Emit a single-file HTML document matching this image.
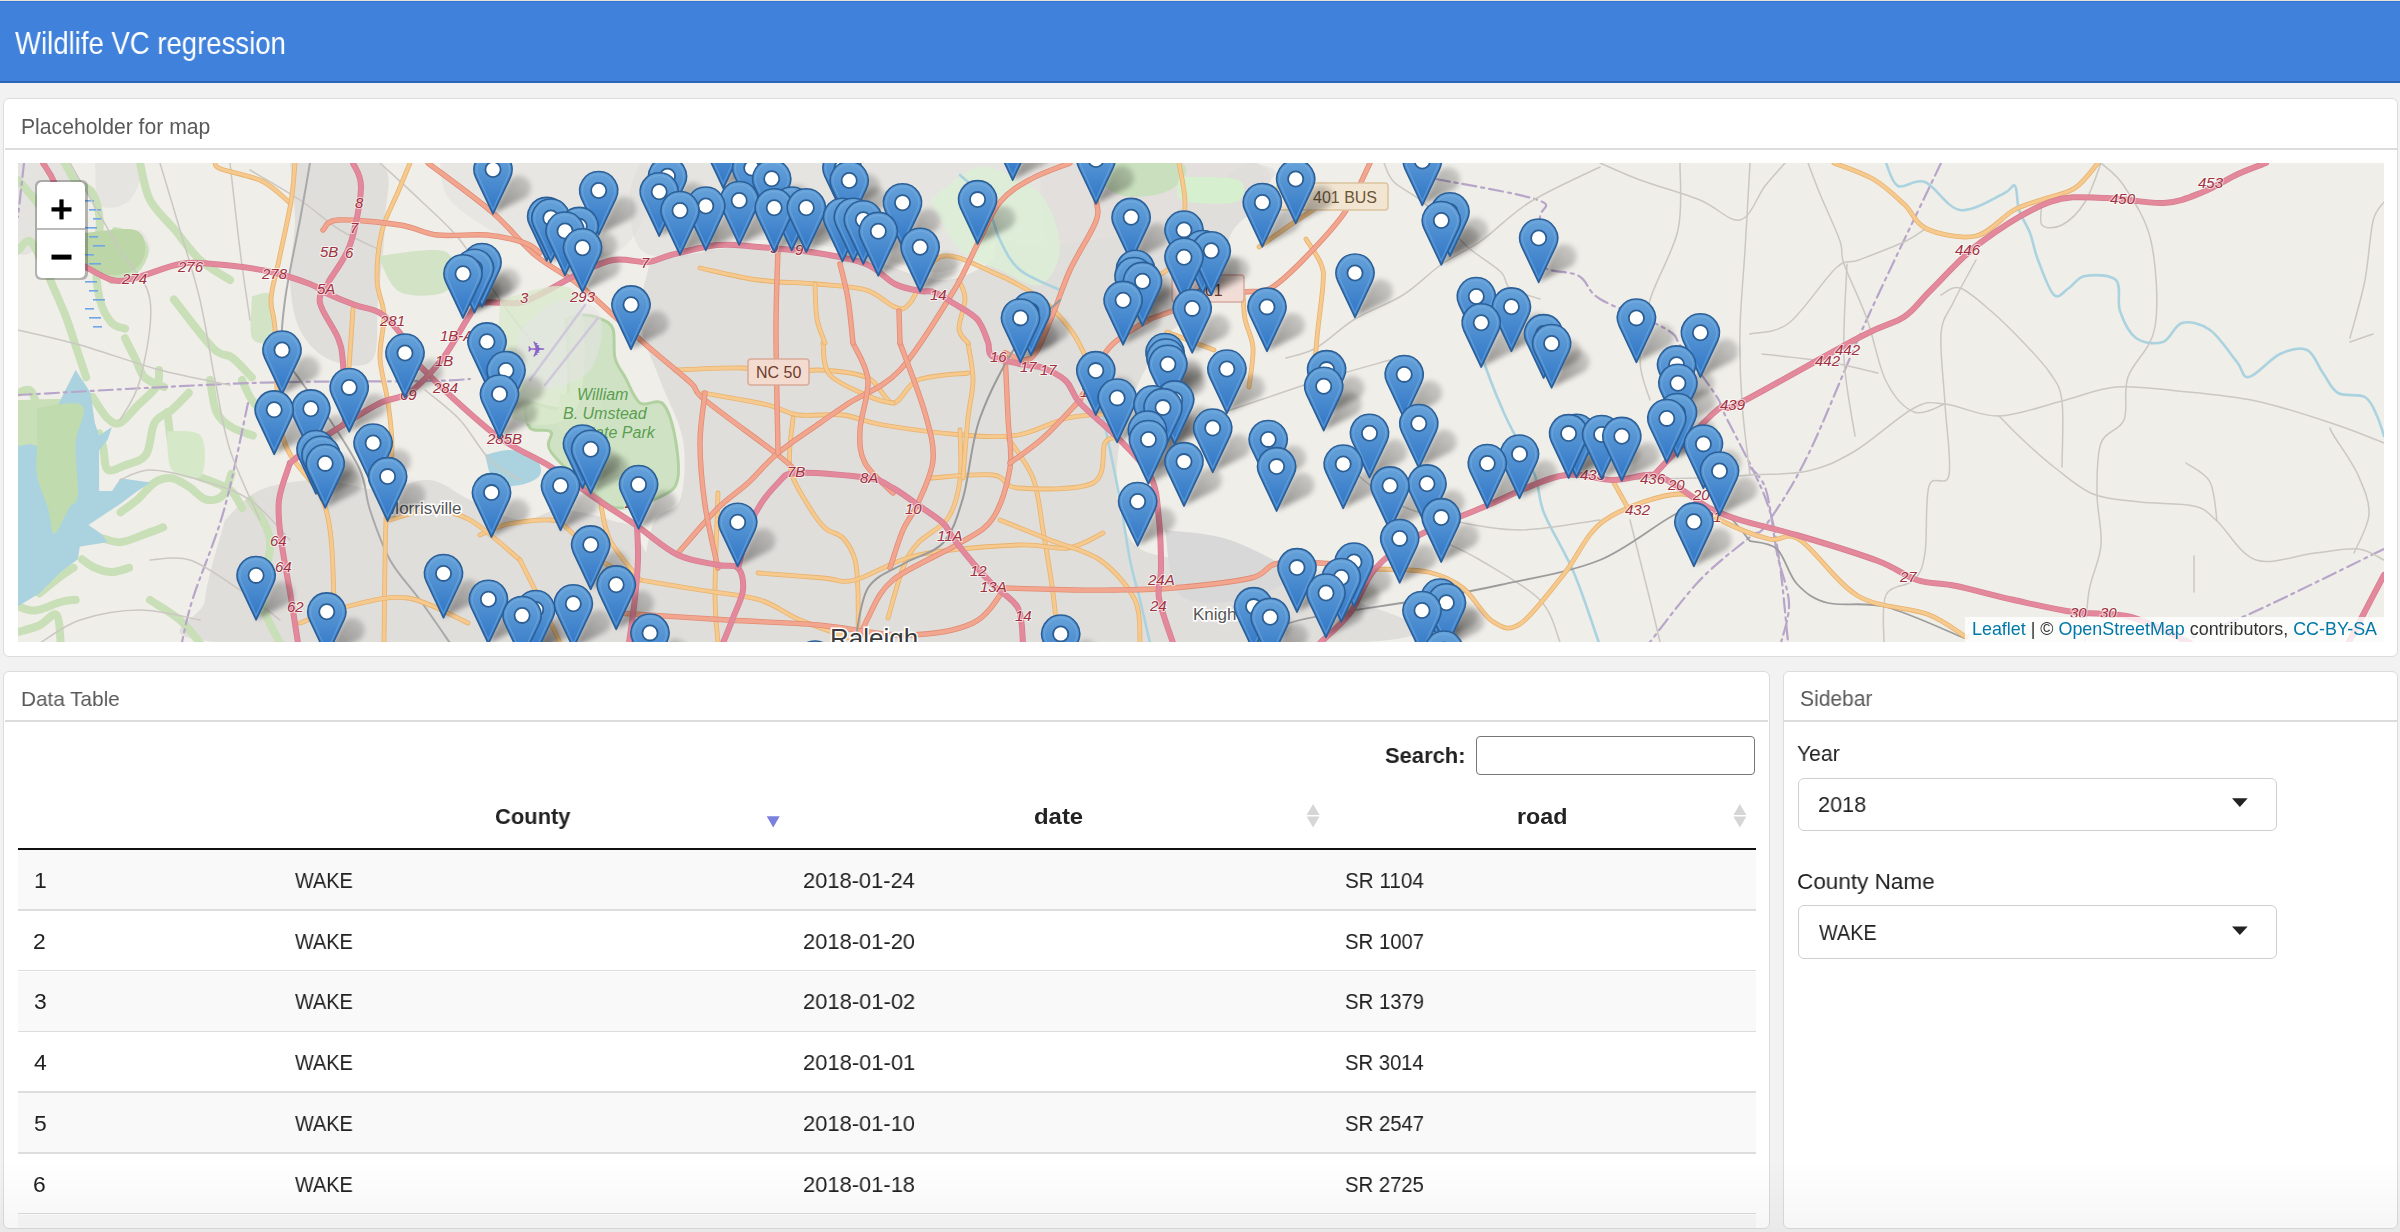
<!DOCTYPE html><html><head><meta charset="utf-8"><title>Wildlife VC regression</title><style>
html,body{margin:0;padding:0;}
body{width:2400px;height:1232px;overflow:hidden;background:#f2f2f2;position:relative;font-family:"Liberation Sans",sans-serif;}
.abs{position:absolute;}
.t{position:absolute;white-space:nowrap;transform-origin:0 0;will-change:transform;}
.card{position:absolute;background:#fff;border:1.5px solid #dcdcdc;border-radius:6px;box-sizing:border-box;}
.hl{position:absolute;height:2px;background:#dcdcdc;}
</style></head><body>
<div class="abs" style="left:0;top:0;width:2400px;height:1px;background:#e6e3da"></div>
<div class="abs" style="left:0;top:1px;width:2400px;height:1px;background:#3474d8"></div>
<div class="abs" style="left:0;top:2px;width:2400px;height:79px;background:#4082db"></div>
<div class="abs" style="left:0;top:81px;width:2400px;height:1.5px;background:#2f67b8"></div>
<div class="card" style="left:3px;top:97.5px;width:2395px;height:559px;"></div>
<div class="hl" style="left:4.5px;top:148px;width:2392px;"></div>
<div class="card" style="left:3px;top:670.5px;width:1766.5px;height:558px;"></div>
<div class="hl" style="left:4.5px;top:720px;width:1763.5px;"></div>
<div class="card" style="left:1782.5px;top:670.5px;width:615.5px;height:558px;"></div>
<div class="hl" style="left:1784px;top:720px;width:612.5px;"></div>
<div class="abs" style="left:1476px;top:735.5px;width:279px;height:39px;border:1.5px solid #767676;border-radius:4px;box-sizing:border-box;background:#fff"></div>
<div class="abs" style="left:18px;top:848px;width:1738px;height:2px;background:#111"></div>
<div class="abs" style="left:18px;top:850px;width:1738px;height:377.5px;overflow:hidden">
<div class="abs" style="left:0;top:0.00px;width:1738px;height:60.75px;background:#f9f9f9"></div>
<div class="abs" style="left:0;top:59.20px;width:1738px;height:1.5px;background:#dddddd"></div>
<div class="abs" style="left:0;top:119.95px;width:1738px;height:1.5px;background:#dddddd"></div>
<div class="abs" style="left:0;top:121.50px;width:1738px;height:60.75px;background:#f9f9f9"></div>
<div class="abs" style="left:0;top:180.70px;width:1738px;height:1.5px;background:#dddddd"></div>
<div class="abs" style="left:0;top:241.45px;width:1738px;height:1.5px;background:#dddddd"></div>
<div class="abs" style="left:0;top:243.00px;width:1738px;height:60.75px;background:#f9f9f9"></div>
<div class="abs" style="left:0;top:302.20px;width:1738px;height:1.5px;background:#dddddd"></div>
<div class="abs" style="left:0;top:362.95px;width:1738px;height:1.5px;background:#dddddd"></div>
<div class="abs" style="left:0;top:364.50px;width:1738px;height:60.75px;background:#f9f9f9"></div>
<div class="abs" style="left:0;top:423.70px;width:1738px;height:1.5px;background:#dddddd"></div>
</div>
<svg class="abs" style="left:0;top:0" width="2400" height="1232">
<path d="M766.7,816.3 L779.7,816.3 L773.2,827.4 Z" fill="#7b80dc"/>
<path d="M1306.6,815 L1319.6,815 L1313.1,804 Z" fill="#d6d6d6"/>
<path d="M1306.6,816.5 L1319.6,816.5 L1313.1,827.5 Z" fill="#d6d6d6"/>
<path d="M1733.4,815 L1746.4,815 L1739.9,804 Z" fill="#d6d6d6"/>
<path d="M1733.4,816.5 L1746.4,816.5 L1739.9,827.5 Z" fill="#d6d6d6"/>
</svg>
<div class="abs" style="left:1797.5px;top:777.5px;width:479px;height:53.5px;border:1.5px solid #cfcfcf;border-radius:6px;box-sizing:border-box;background:#fff"></div>
<div class="abs" style="left:1797.5px;top:905px;width:479px;height:53.5px;border:1.5px solid #cfcfcf;border-radius:6px;box-sizing:border-box;background:#fff"></div>
<svg class="abs" style="left:0;top:0" width="2400" height="1232">
<path d="M2232,798.3 L2247.7,798.3 L2239.85,807.0 Z" fill="#222"/>
<path d="M2232,926.4 L2247.7,926.4 L2239.85,935.1 Z" fill="#222"/>
</svg>
<svg class="abs" style="left:18px;top:163px" width="2366" height="479" viewBox="18 163 2366 479">
<defs>
<linearGradient id="mg" x1="0" y1="0" x2="0" y2="1"><stop offset="0" stop-color="#67a3da"/><stop offset="1" stop-color="#2f75c6"/></linearGradient>
<linearGradient id="sg" x1="0" y1="1" x2="1" y2="0"><stop offset="0" stop-color="#000" stop-opacity="0.42"/><stop offset="1" stop-color="#000" stop-opacity="0.12"/></linearGradient>
<filter id="shb" x="-20%" y="-20%" width="140%" height="140%"><feGaussianBlur stdDeviation="2.6"/></filter>
<filter id="bl1" x="-5%" y="-5%" width="110%" height="110%"><feGaussianBlur stdDeviation="1.2"/></filter>
<g id="mk">
<path d="M0,44.5 L-17.2,8.1 A19,19 0 1 1 17.2,8.1 Z" fill="url(#mg)" stroke="#2b5f98" stroke-width="1.6" stroke-linejoin="round"/>
<path d="M0,40 L-14.5,7.4 A16.2,16.2 0 1 1 14.5,7.4 Z" fill="none" stroke="#7fb3e3" stroke-opacity="0.45" stroke-width="1.2"/>
<circle r="7.6" fill="#fff" stroke="#2d5e92" stroke-width="1.8"/>
</g>
</defs>
<rect x="18" y="163" width="2366" height="479" fill="#f0eee9"/>
<path d="M650.0,262.0 C668.3,259.2 725.0,245.7 760.0,245.0 C795.0,244.3 830.0,252.2 860.0,258.0 C890.0,263.8 918.3,279.3 940.0,280.0 C961.7,280.7 980.0,268.7 990.0,262.0 C1000.0,255.3 990.0,242.8 1000.0,240.0 C1010.0,237.2 1025.0,247.5 1050.0,245.0 C1075.0,242.5 1116.7,238.7 1150.0,225.0 C1183.3,211.3 1231.3,167.2 1250.0,163.0 C1268.7,158.8 1265.0,188.5 1262.0,200.0 C1259.0,211.5 1240.3,217.0 1232.0,232.0 C1223.7,247.0 1222.0,273.7 1212.0,290.0 C1202.0,306.3 1184.0,315.0 1172.0,330.0 C1160.0,345.0 1148.7,361.7 1140.0,380.0 C1131.3,398.3 1123.7,420.0 1120.0,440.0 C1116.3,460.0 1115.5,482.5 1118.0,500.0 C1120.5,517.5 1124.7,535.0 1135.0,545.0 C1145.3,555.0 1162.5,555.5 1180.0,560.0 C1197.5,564.5 1220.0,567.8 1240.0,572.0 C1260.0,576.2 1281.7,580.7 1300.0,585.0 C1318.3,589.3 1339.2,588.5 1350.0,598.0 C1360.8,607.5 1490.0,634.7 1365.0,642.0 C1240.0,649.3 725.5,649.0 600.0,642.0 C474.5,635.0 605.3,612.0 612.0,600.0 C618.7,588.0 632.8,583.3 640.0,570.0 C647.2,556.7 648.3,531.7 655.0,520.0 C661.7,508.3 675.3,513.3 680.0,500.0 C684.7,486.7 686.3,460.0 683.0,440.0 C679.7,420.0 667.2,400.0 660.0,380.0 C652.8,360.0 641.7,339.7 640.0,320.0 C638.3,300.3 648.3,271.7 650.0,262.0 Z" fill="#e0dedb" />
<path d="M640.0,163.0 C741.7,163.0 1165.0,152.7 1250.0,163.0 C1335.0,173.3 1183.3,211.3 1150.0,225.0 C1116.7,238.7 1075.0,242.5 1050.0,245.0 C1025.0,247.5 1018.3,235.5 1000.0,240.0 C981.7,244.5 963.3,270.0 940.0,272.0 C916.7,274.0 890.0,257.3 860.0,252.0 C830.0,246.7 795.0,239.5 760.0,240.0 C725.0,240.5 671.7,261.7 650.0,255.0 C628.3,248.3 631.7,215.3 630.0,200.0 C628.3,184.7 638.3,169.2 640.0,163.0 Z" fill="#e0dedb" fill-opacity="0.6"/>
<path d="M225.0,520.0 C230.8,515.0 244.2,496.7 260.0,490.0 C275.8,483.3 300.0,480.0 320.0,480.0 C340.0,480.0 361.7,490.0 380.0,490.0 C398.3,490.0 415.0,478.3 430.0,480.0 C445.0,481.7 455.0,493.3 470.0,500.0 C485.0,506.7 505.0,518.3 520.0,520.0 C535.0,521.7 545.0,510.0 560.0,510.0 C575.0,510.0 596.7,515.0 610.0,520.0 C623.3,525.0 635.0,519.7 640.0,540.0 C645.0,560.3 710.8,625.0 640.0,642.0 C569.2,659.0 287.5,649.0 215.0,642.0 C142.5,635.0 203.3,620.3 205.0,600.0 C206.7,579.7 221.7,533.3 225.0,520.0 Z" fill="#e0dedb" />
<path d="M290.0,163.0 C305.0,163.0 364.2,153.5 380.0,163.0 C395.8,172.5 385.3,197.2 385.0,220.0 C384.7,242.8 380.2,276.7 378.0,300.0 C375.8,323.3 380.0,350.0 372.0,360.0 C364.0,370.0 342.0,365.0 330.0,360.0 C318.0,355.0 306.7,343.3 300.0,330.0 C293.3,316.7 290.8,298.3 290.0,280.0 C289.2,261.7 295.0,239.5 295.0,220.0 C295.0,200.5 290.8,172.5 290.0,163.0 Z" fill="#e0dedb" />
<path d="M440.0,163.0 C473.3,163.0 605.0,156.8 640.0,163.0 C675.0,169.2 653.3,185.5 650.0,200.0 C646.7,214.5 635.0,240.3 620.0,250.0 C605.0,259.7 580.0,260.5 560.0,258.0 C540.0,255.5 518.3,244.7 500.0,235.0 C481.7,225.3 460.0,212.0 450.0,200.0 C440.0,188.0 441.7,169.2 440.0,163.0 Z" fill="#e0dedb" fill-opacity="0.5"/>
<path d="M1040.0,163.0 C1075.0,163.0 1213.0,156.8 1250.0,163.0 C1287.0,169.2 1265.0,188.5 1262.0,200.0 C1259.0,211.5 1240.3,217.0 1232.0,232.0 C1223.7,247.0 1222.0,273.7 1212.0,290.0 C1202.0,306.3 1187.0,321.3 1172.0,330.0 C1157.0,338.7 1137.0,346.7 1122.0,342.0 C1107.0,337.3 1093.7,315.3 1082.0,302.0 C1070.3,288.7 1058.7,277.0 1052.0,262.0 C1045.3,247.0 1044.0,228.5 1042.0,212.0 C1040.0,195.5 1040.3,171.2 1040.0,163.0 Z" fill="#e0dedb" fill-opacity="0.75"/>
<path d="M18.0,163.0 C26.7,163.0 62.7,156.8 70.0,163.0 C77.3,169.2 66.2,187.2 62.0,200.0 C57.8,212.8 52.3,231.7 45.0,240.0 C37.7,248.3 22.5,262.8 18.0,250.0 C13.5,237.2 18.0,177.5 18.0,163.0 Z" fill="#e0dedb" fill-opacity="0.7"/>
<path d="M95.0,163.0 C102.5,163.0 134.2,156.8 140.0,163.0 C145.8,169.2 136.7,193.0 130.0,200.0 C123.3,207.0 105.8,211.2 100.0,205.0 C94.2,198.8 95.8,170.0 95.0,163.0 Z" fill="#e0dedb" fill-opacity="0.6"/>
<path d="M120.0,240.0 C123.3,238.3 135.0,228.3 140.0,230.0 C145.0,231.7 150.8,244.7 150.0,250.0 C149.2,255.3 140.0,263.7 135.0,262.0 C130.0,260.3 122.5,243.7 120.0,240.0 Z" fill="#e0dedb" fill-opacity="0.5"/>
<path d="M1165.0,530.0 C1175.8,531.7 1209.2,532.5 1230.0,540.0 C1250.8,547.5 1288.3,565.0 1290.0,575.0 C1291.7,585.0 1258.3,596.7 1240.0,600.0 C1221.7,603.3 1192.5,606.7 1180.0,595.0 C1167.5,583.3 1167.5,540.8 1165.0,530.0 Z" fill="#d9d8d8" />
<path d="M566.0,319.0 C569.0,318.3 578.2,315.0 584.0,315.0 C589.8,315.0 596.2,316.7 601.0,319.0 C605.8,321.3 610.7,322.5 613.0,329.0 C615.3,335.5 613.0,350.0 615.0,358.0 C617.0,366.0 620.8,369.5 625.0,377.0 C629.2,384.5 633.8,398.7 640.0,403.0 C646.2,407.3 656.3,398.2 662.0,403.0 C667.7,407.8 671.3,419.7 674.0,432.0 C676.7,444.3 679.7,466.5 678.0,477.0 C676.3,487.5 673.5,489.8 664.0,495.0 C654.5,500.2 632.3,508.0 621.0,508.0 C609.7,508.0 607.7,504.3 596.0,495.0 C584.3,485.7 558.5,462.5 551.0,452.0 C543.5,441.5 554.5,436.0 551.0,432.0 C547.5,428.0 533.8,432.8 530.0,428.0 C526.2,423.2 522.0,407.2 528.0,403.0 C534.0,398.8 559.7,417.0 566.0,403.0 C572.3,389.0 566.0,333.0 566.0,319.0 Z" fill="#cfe3c4" stroke="#b2d1a1" stroke-width="3"/>
<path d="M64.8,163.0 C66.7,166.2 71.9,177.6 76.4,182.5 C80.9,187.4 88.1,185.7 92.0,192.2 C95.9,198.7 99.1,210.0 99.8,221.4 C100.5,232.8 96.0,247.4 96.0,260.4 C96.0,273.4 97.2,289.0 99.8,299.4 C102.4,309.8 107.3,317.8 111.5,322.7 C115.7,327.6 122.8,327.6 125.0,328.6" fill="none" stroke="#c9dfb8" stroke-width="8" stroke-linecap="round" stroke-linejoin="round" />
<path d="M18.0,250.7 C19.9,249.1 25.8,239.4 29.7,241.0 C33.6,242.6 36.9,251.3 41.4,260.4 C45.9,269.5 52.8,285.8 57.0,295.5 C61.2,305.2 63.5,310.1 66.7,318.9 C69.9,327.6 73.2,338.3 76.4,348.0 C79.7,357.7 84.6,372.4 86.2,377.3" fill="none" stroke="#c9dfb8" stroke-width="8" stroke-linecap="round" stroke-linejoin="round" />
<path d="M115.4,231.2 C118.7,232.2 130.0,233.8 134.9,237.0 C139.8,240.2 144.6,245.2 144.6,250.7 C144.6,256.2 140.4,265.1 134.9,270.0 C129.4,274.9 115.4,278.3 111.5,280.0" fill="none" stroke="#c9dfb8" stroke-width="8" stroke-linecap="round" stroke-linejoin="round" />
<path d="M125.0,338.3 C126.7,341.6 131.6,351.3 134.9,357.8 C138.2,364.3 139.7,372.4 144.6,377.3 C149.5,382.2 160.8,385.4 164.1,387.0" fill="none" stroke="#c9dfb8" stroke-width="8" stroke-linecap="round" stroke-linejoin="round" />
<path d="M173.9,299.4 C180.4,307.5 203.1,338.3 212.8,348.0 C222.5,357.7 225.8,352.9 232.3,357.8 C238.8,362.7 248.6,374.1 251.8,377.3" fill="none" stroke="#c9dfb8" stroke-width="8" stroke-linecap="round" stroke-linejoin="round" />
<path d="M18.0,392.8 C20.1,392.4 27.2,387.5 30.8,390.7 C34.4,393.9 36.1,404.9 39.3,412.0 C42.5,419.1 46.8,425.9 50.0,433.4 C53.2,440.9 57.2,452.9 58.6,456.8" fill="none" stroke="#c9dfb8" stroke-width="8" stroke-linecap="round" stroke-linejoin="round" />
<path d="M92.7,397.0 C95.2,400.6 103.0,414.1 107.6,418.4 C112.2,422.7 115.5,424.8 120.5,422.7 C125.5,420.6 131.5,411.7 137.5,405.6 C143.5,399.6 153.1,392.3 156.7,386.4 C160.3,380.5 158.6,372.7 159.0,370.0" fill="none" stroke="#c9dfb8" stroke-width="8" stroke-linecap="round" stroke-linejoin="round" />
<path d="M99.1,433.4 C99.8,435.9 102.0,442.3 103.4,448.3 C104.8,454.3 104.0,466.8 107.6,469.6 C111.1,472.5 118.3,467.9 124.7,465.4 C131.1,462.9 141.0,461.8 146.0,454.7 C151.0,447.6 150.3,430.2 154.6,422.7 C158.9,415.2 166.0,414.9 171.7,409.9 C177.4,404.9 186.0,395.6 188.8,392.8" fill="none" stroke="#c9dfb8" stroke-width="8" stroke-linecap="round" stroke-linejoin="round" />
<path d="M120.5,512.3 C123.3,510.2 131.8,504.5 137.5,499.5 C143.2,494.5 148.9,486.1 154.6,482.5 C160.3,478.9 166.0,477.5 171.7,478.2 C177.4,478.9 183.1,483.1 188.8,486.7 C194.5,490.2 200.1,498.1 205.8,499.5 C211.5,500.9 218.6,499.6 222.9,495.3 C227.2,491.0 230.0,477.5 231.4,473.9" fill="none" stroke="#c9dfb8" stroke-width="8" stroke-linecap="round" stroke-linejoin="round" />
<path d="M167.4,412.0 C168.1,417.3 169.6,435.8 171.7,444.0 C173.8,452.2 176.6,456.1 180.2,461.1 C183.8,466.1 187.3,470.3 193.0,473.9 C198.7,477.5 208.0,479.6 214.4,482.5 C220.8,485.4 226.8,486.8 231.4,491.0 C236.0,495.2 240.3,505.2 242.1,508.0" fill="none" stroke="#c9dfb8" stroke-width="8" stroke-linecap="round" stroke-linejoin="round" />
<path d="M82.0,542.2 C84.8,541.5 92.7,538.0 99.1,538.0 C105.5,538.0 112.7,542.9 120.5,542.2 C128.3,541.5 138.9,536.2 146.0,533.7 C153.1,531.2 160.2,528.4 163.1,527.3" fill="none" stroke="#c9dfb8" stroke-width="8" stroke-linecap="round" stroke-linejoin="round" />
<path d="M82.0,559.3 C84.1,560.7 89.8,565.7 94.8,567.8 C99.8,569.9 106.2,572.1 111.9,572.1 C117.6,572.1 126.2,568.5 129.0,567.8" fill="none" stroke="#c9dfb8" stroke-width="8" stroke-linecap="round" stroke-linejoin="round" />
<path d="M39.3,593.4 C42.9,590.6 55.0,580.7 60.7,576.4 C66.4,572.1 71.4,569.2 73.5,567.8" fill="none" stroke="#c9dfb8" stroke-width="8" stroke-linecap="round" stroke-linejoin="round" />
<path d="M18.0,606.3 C20.9,607.0 28.0,611.2 35.1,610.5 C42.2,609.8 54.0,603.8 60.7,602.0 C67.5,600.2 73.1,600.2 75.6,599.8" fill="none" stroke="#c9dfb8" stroke-width="8" stroke-linecap="round" stroke-linejoin="round" />
<path d="M18.0,632.0 C21.6,630.9 32.9,628.4 39.3,625.5 C45.7,622.6 52.8,611.9 56.4,614.8 C60.0,617.7 60.0,638.3 60.7,643.0" fill="none" stroke="#c9dfb8" stroke-width="8" stroke-linecap="round" stroke-linejoin="round" />
<path d="M210.0,380.0 C211.1,385.3 212.9,404.2 216.5,412.0 C220.1,419.8 225.3,423.1 231.4,427.0 C237.5,430.9 249.2,434.1 252.8,435.5" fill="none" stroke="#c9dfb8" stroke-width="8" stroke-linecap="round" stroke-linejoin="round" />
<path d="M242.0,380.0 C243.8,383.6 247.5,394.2 252.8,401.3 C258.1,408.4 270.5,419.1 274.0,422.7" fill="none" stroke="#c9dfb8" stroke-width="8" stroke-linecap="round" stroke-linejoin="round" />
<path d="M140.0,163.0 C141.7,169.2 144.2,188.8 150.0,200.0 C155.8,211.2 166.7,220.0 175.0,230.0 C183.3,240.0 190.8,251.7 200.0,260.0 C209.2,268.3 225.0,276.7 230.0,280.0" fill="none" stroke="#c9dfb8" stroke-width="8" stroke-linecap="round" stroke-linejoin="round" />
<path d="M18.0,180.0 C20.8,183.3 29.7,193.3 35.0,200.0 C40.3,206.7 47.5,216.7 50.0,220.0" fill="none" stroke="#c9dfb8" stroke-width="8" stroke-linecap="round" stroke-linejoin="round" />
<path d="M150.0,600.0 C155.0,603.3 171.7,612.8 180.0,620.0 C188.3,627.2 196.7,639.2 200.0,643.0" fill="none" stroke="#c9dfb8" stroke-width="8" stroke-linecap="round" stroke-linejoin="round" />
<path d="M250.0,500.0 C253.3,506.7 268.0,523.3 270.0,540.0 C272.0,556.7 260.3,582.8 262.0,600.0 C263.7,617.2 277.0,635.8 280.0,643.0" fill="none" stroke="#c9dfb8" stroke-width="8" stroke-linecap="round" stroke-linejoin="round" />
<path d="M84.0,233.0 C92.5,232.5 124.8,226.8 135.0,230.0 C145.2,233.2 145.8,245.0 145.0,252.0 C144.2,259.0 139.2,268.7 130.0,272.0 C120.8,275.3 97.7,278.5 90.0,272.0 C82.3,265.5 85.0,239.5 84.0,233.0 Z" fill="#bcd6a8" />
<path d="M167.0,431.0 C172.7,431.8 195.3,428.5 201.0,436.0 C206.7,443.5 205.8,470.3 201.0,476.0 C196.2,481.7 177.7,477.5 172.0,470.0 C166.3,462.5 167.8,437.5 167.0,431.0 Z" fill="#d5e8c8" />
<path d="M18.0,400.0 C28.7,400.5 72.3,395.7 82.0,403.0 C91.7,410.3 86.7,436.8 76.0,444.0 C65.3,451.2 27.7,453.3 18.0,446.0 C8.3,438.7 18.0,407.7 18.0,400.0 Z" fill="#c9dfb8" />
<path d="M378.0,256.0 C389.3,255.3 434.3,246.3 446.0,252.0 C457.7,257.7 455.7,283.3 448.0,290.0 C440.3,296.7 411.7,297.7 400.0,292.0 C388.3,286.3 381.7,262.0 378.0,256.0 Z" fill="#d2e4c5" />
<path d="M252.0,296.0 C255.3,296.0 268.7,289.0 272.0,296.0 C275.3,303.0 275.3,331.0 272.0,338.0 C268.7,345.0 255.3,345.0 252.0,338.0 C248.7,331.0 252.0,303.0 252.0,296.0 Z" fill="#d2e4c5" />
<path d="M930.0,200.0 C937.5,194.7 961.7,172.2 975.0,168.0 C988.3,163.8 998.3,169.7 1010.0,175.0 C1021.7,180.3 1036.7,187.5 1045.0,200.0 C1053.3,212.5 1060.8,235.8 1060.0,250.0 C1059.2,264.2 1050.0,281.7 1040.0,285.0 C1030.0,288.3 1013.3,275.8 1000.0,270.0 C986.7,264.2 971.7,261.7 960.0,250.0 C948.3,238.3 935.0,208.3 930.0,200.0 Z" fill="#dcefd6" fill-opacity="0.8"/>
<path d="M1080.0,163.0 C1096.7,163.0 1165.0,158.5 1180.0,163.0 C1195.0,167.5 1180.0,184.7 1170.0,190.0 C1160.0,195.3 1135.0,199.5 1120.0,195.0 C1105.0,190.5 1086.7,168.3 1080.0,163.0 Z" fill="#c9dfbd" />
<path d="M1179.0,177.0 C1188.8,177.5 1228.5,175.8 1238.0,180.0 C1247.5,184.2 1245.3,198.7 1236.0,202.0 C1226.7,205.3 1191.5,204.2 1182.0,200.0 C1172.5,195.8 1179.5,180.8 1179.0,177.0 Z" fill="#d5efcf" />
<path d="M560.0,395.0 C566.7,394.5 595.0,386.2 600.0,392.0 C605.0,397.8 596.7,423.7 590.0,430.0 C583.3,436.3 565.0,435.8 560.0,430.0 C555.0,424.2 560.0,400.8 560.0,395.0 Z" fill="#d2e4c5" />
<polygon points="75.6,370.0 90.6,392.8 94.8,422.7 99.1,435.5 112.0,427.0 107.6,439.8 99.1,450.4 99.1,491.0 112.0,491.0 120.5,478.2 150.3,482.5 137.5,491.0 120.5,503.8 107.6,512.3 88.4,525.1 101.2,533.7 107.6,542.2 79.9,546.5 77.8,559.3 60.7,572.1 39.3,593.4 18.0,606.3 18.0,446.0 30.8,444.0 37.2,446.0" fill="#aad3df" />
<path d="M37.2,407.7 C44.7,407.4 75.6,399.6 82.0,405.6 C88.4,411.7 76.3,429.1 75.6,444.0 C74.9,458.9 78.9,484.6 77.8,495.3 C76.7,506.0 73.1,501.6 69.2,508.0 C65.3,514.4 57.8,533.7 54.3,533.7 C50.8,533.7 50.8,517.6 47.9,508.0 C45.0,498.4 39.0,486.7 37.2,476.0 C35.4,465.3 37.2,455.4 37.2,444.0 C37.2,432.6 37.2,413.8 37.2,407.7 Z" fill="#c0dbad" />
<path d="M485.0,455.0 C489.2,454.2 501.7,449.5 510.0,450.0 C518.3,450.5 530.0,453.8 535.0,458.0 C540.0,462.2 542.5,470.5 540.0,475.0 C537.5,479.5 527.5,483.7 520.0,485.0 C512.5,486.3 500.8,488.0 495.0,483.0 C489.2,478.0 486.7,459.7 485.0,455.0 Z" fill="#aad3df" />
<rect x="85" y="200" width="9" height="1.6" fill="#6fa6e6"/>
<rect x="89" y="209" width="12" height="1.6" fill="#6fa6e6"/>
<rect x="93" y="218" width="9" height="1.6" fill="#6fa6e6"/>
<rect x="85" y="227" width="12" height="1.6" fill="#6fa6e6"/>
<rect x="89" y="236" width="9" height="1.6" fill="#6fa6e6"/>
<rect x="93" y="245" width="12" height="1.6" fill="#6fa6e6"/>
<rect x="85" y="254" width="9" height="1.6" fill="#6fa6e6"/>
<rect x="89" y="263" width="12" height="1.6" fill="#6fa6e6"/>
<rect x="93" y="272" width="9" height="1.6" fill="#6fa6e6"/>
<rect x="85" y="281" width="12" height="1.6" fill="#6fa6e6"/>
<rect x="89" y="290" width="9" height="1.6" fill="#6fa6e6"/>
<rect x="93" y="299" width="12" height="1.6" fill="#6fa6e6"/>
<rect x="85" y="308" width="9" height="1.6" fill="#6fa6e6"/>
<rect x="89" y="317" width="12" height="1.6" fill="#6fa6e6"/>
<rect x="93" y="326" width="9" height="1.6" fill="#6fa6e6"/>
<path d="M18.0,395.0 C57.0,393.0 183.8,385.3 252.0,383.0 C320.2,380.7 390.7,381.7 427.0,381.0 C463.3,380.3 462.8,379.3 470.0,379.0" fill="none" stroke="#b7a6c9" stroke-width="2.2" stroke-linecap="round" stroke-linejoin="round" stroke-dasharray="14 5 3 5"/>
<path d="M248.0,403.0 C244.0,420.8 233.2,477.5 224.0,510.0 C214.8,542.5 200.0,576.0 193.0,598.0 C186.0,620.0 183.8,634.7 182.0,642.0" fill="none" stroke="#b7a6c9" stroke-width="2.2" stroke-linecap="round" stroke-linejoin="round" stroke-dasharray="14 5 3 5"/>
<path d="M24.0,163.0 L18.0,217.0" fill="none" stroke="#b7a6c9" stroke-width="2.2" stroke-linecap="round" stroke-linejoin="round" stroke-dasharray="14 5 3 5"/>
<path d="M1436.0,179.0 C1453.0,182.5 1520.7,193.5 1538.0,200.0 C1555.3,206.5 1539.7,207.3 1540.0,218.0 C1540.3,228.7 1533.5,254.3 1540.0,264.0 C1546.5,273.7 1569.0,270.2 1579.0,276.0 C1589.0,281.8 1585.5,290.2 1600.0,299.0 C1614.5,307.8 1652.3,320.8 1666.0,329.0 C1679.7,337.2 1673.5,336.7 1682.0,348.0 C1690.5,359.3 1710.0,386.2 1717.0,397.0 C1724.0,407.8 1716.0,396.3 1724.0,413.0 C1732.0,429.7 1755.8,472.7 1765.0,497.0 C1774.2,521.3 1775.2,534.8 1779.0,559.0 C1782.8,583.2 1786.5,628.2 1788.0,642.0" fill="none" stroke="#b7a6c9" stroke-width="2.2" stroke-linecap="round" stroke-linejoin="round" stroke-dasharray="14 5 3 5"/>
<path d="M1941.0,163.0 C1928.7,189.0 1889.2,270.3 1867.0,319.0 C1844.8,367.7 1824.8,420.7 1808.0,455.0 C1791.2,489.3 1775.7,511.3 1766.0,525.0 C1756.3,538.7 1761.0,527.8 1750.0,537.0 C1739.0,546.2 1716.7,562.5 1700.0,580.0 C1683.3,597.5 1658.3,631.7 1650.0,642.0" fill="none" stroke="#b7a6c9" stroke-width="2.2" stroke-linecap="round" stroke-linejoin="round" stroke-dasharray="14 5 3 5"/>
<path d="M2384.0,549.0 C2362.7,559.3 2290.3,595.3 2256.0,611.0 C2221.7,626.7 2191.0,637.7 2178.0,643.0" fill="none" stroke="#b7a6c9" stroke-width="2.2" stroke-linecap="round" stroke-linejoin="round" stroke-dasharray="14 5 3 5"/>
<path d="M1750.0,467.0 C1752.7,470.8 1761.5,475.7 1766.0,490.0 C1770.5,504.3 1773.2,534.2 1777.0,553.0 C1780.8,571.8 1788.3,588.0 1789.0,603.0 C1789.7,618.0 1782.3,636.3 1781.0,643.0" fill="none" stroke="#b7a6c9" stroke-width="2.2" stroke-linecap="round" stroke-linejoin="round" stroke-dasharray="14 5 3 5"/>
<path d="M1886.0,163.0 C1888.0,166.8 1891.5,182.8 1898.0,186.0 C1904.5,189.2 1914.7,178.0 1925.0,182.0 C1935.3,186.0 1947.0,208.0 1960.0,210.0 C1973.0,212.0 1993.8,198.0 2003.0,194.0 C2012.2,190.0 2012.3,183.3 2015.0,186.0 C2017.7,188.7 2016.5,202.2 2019.0,210.0 C2021.5,217.8 2026.8,224.7 2030.0,233.0 C2033.2,241.3 2034.0,249.7 2038.0,260.0 C2042.0,270.3 2048.8,290.3 2054.0,295.0 C2059.2,299.7 2063.8,291.2 2069.0,288.0 C2074.2,284.8 2077.2,277.3 2085.0,276.0 C2092.8,274.7 2110.2,274.2 2116.0,280.0 C2121.8,285.8 2116.7,301.3 2120.0,311.0 C2123.3,320.7 2128.8,332.8 2136.0,338.0 C2143.2,343.2 2155.3,344.5 2163.0,342.0 C2170.7,339.5 2174.2,325.0 2182.0,323.0 C2189.8,321.0 2200.8,323.5 2210.0,330.0 C2219.2,336.5 2230.5,354.2 2237.0,362.0 C2243.5,369.8 2241.8,378.3 2249.0,377.0 C2256.2,375.7 2270.3,358.5 2280.0,354.0 C2289.7,349.5 2299.8,346.8 2307.0,350.0 C2314.2,353.2 2317.8,365.8 2323.0,373.0 C2328.2,380.2 2331.0,389.0 2338.0,393.0 C2345.0,397.0 2358.5,393.2 2365.0,397.0 C2371.5,400.8 2373.8,409.5 2377.0,416.0 C2380.2,422.5 2382.8,432.7 2384.0,436.0" fill="none" stroke="#aad3df" stroke-width="2.6" stroke-linecap="round" stroke-linejoin="round" />
<path d="M1470.0,300.0 C1471.8,308.8 1475.3,334.2 1481.0,353.0 C1486.7,371.8 1495.2,393.0 1504.0,413.0 C1512.8,433.0 1527.3,456.3 1534.0,473.0 C1540.7,489.7 1537.3,496.3 1544.0,513.0 C1550.7,529.7 1564.8,551.3 1574.0,573.0 C1583.2,594.7 1594.8,631.3 1599.0,643.0" fill="none" stroke="#aad3df" stroke-width="2.6" stroke-linecap="round" stroke-linejoin="round" />
<path d="M960.0,175.0 C964.2,179.2 978.3,189.2 985.0,200.0 C991.7,210.8 994.2,228.3 1000.0,240.0 C1005.8,251.7 1010.0,261.7 1020.0,270.0 C1030.0,278.3 1053.3,286.7 1060.0,290.0" fill="none" stroke="#aad3df" stroke-width="2.6" stroke-linecap="round" stroke-linejoin="round" />
<path d="M1100.0,403.0 C1101.7,410.8 1106.7,433.8 1110.0,450.0 C1113.3,466.2 1116.7,481.7 1120.0,500.0 C1123.3,518.3 1126.7,543.3 1130.0,560.0 C1133.3,576.7 1136.7,586.2 1140.0,600.0 C1143.3,613.8 1148.3,635.8 1150.0,643.0" fill="none" stroke="#aad3df" stroke-width="2.6" stroke-linecap="round" stroke-linejoin="round" />
<path d="M1808.0,163.0 C1810.0,168.2 1814.7,181.0 1820.0,194.0 C1825.3,207.0 1836.0,229.3 1840.0,241.0 C1844.0,252.7 1839.5,251.0 1844.0,264.0 C1848.5,277.0 1860.0,299.5 1867.0,319.0 C1874.0,338.5 1878.2,365.5 1886.0,381.0 C1893.8,396.5 1904.2,408.2 1914.0,412.0 C1923.8,415.8 1939.8,405.3 1945.0,404.0" fill="none" stroke="#cbc7c2" stroke-width="1.5" stroke-linecap="round" stroke-linejoin="round" />
<path d="M1750.0,334.0 C1756.5,332.2 1774.7,334.0 1789.0,323.0 C1803.3,312.0 1824.3,278.5 1836.0,268.0 C1847.7,257.5 1847.3,264.5 1859.0,260.0 C1870.7,255.5 1895.0,246.2 1906.0,241.0 C1917.0,235.8 1921.8,231.0 1925.0,229.0" fill="none" stroke="#cbc7c2" stroke-width="1.5" stroke-linecap="round" stroke-linejoin="round" />
<path d="M1762.0,354.0 C1773.0,355.3 1808.7,358.8 1828.0,362.0 C1847.3,365.2 1869.7,371.2 1878.0,373.0" fill="none" stroke="#cbc7c2" stroke-width="1.5" stroke-linecap="round" stroke-linejoin="round" />
<path d="M1847.0,264.0 C1846.5,279.7 1842.7,329.3 1844.0,358.0 C1845.3,386.7 1853.2,423.0 1855.0,436.0" fill="none" stroke="#cbc7c2" stroke-width="1.5" stroke-linecap="round" stroke-linejoin="round" />
<path d="M1600.0,480.0 C1616.7,479.7 1675.0,478.8 1700.0,478.0 C1725.0,477.2 1732.0,476.2 1750.0,475.0 C1768.0,473.8 1790.5,475.0 1808.0,471.0 C1825.5,467.0 1837.3,461.5 1855.0,451.0 C1872.7,440.5 1899.0,415.8 1914.0,408.0 C1929.0,400.2 1930.8,402.7 1945.0,404.0 C1959.2,405.3 1979.5,416.5 1999.0,416.0 C2018.5,415.5 2042.5,405.8 2062.0,401.0 C2081.5,396.2 2096.7,388.7 2116.0,387.0 C2135.3,385.3 2154.7,388.7 2178.0,391.0 C2201.3,393.3 2230.0,395.5 2256.0,401.0 C2282.0,406.5 2312.7,417.0 2334.0,424.0 C2355.3,431.0 2375.7,439.8 2384.0,443.0" fill="none" stroke="#cbc7c2" stroke-width="1.5" stroke-linecap="round" stroke-linejoin="round" />
<path d="M2101.0,163.0 C2104.8,166.8 2115.7,173.0 2124.0,186.0 C2132.3,199.0 2145.8,217.5 2151.0,241.0 C2156.2,264.5 2158.8,304.3 2155.0,327.0 C2151.2,349.7 2133.2,361.5 2128.0,377.0 C2122.8,392.5 2128.5,409.0 2124.0,420.0 C2119.5,431.0 2105.5,430.7 2101.0,443.0 C2096.5,455.3 2097.0,477.0 2097.0,494.0 C2097.0,511.0 2102.3,528.8 2101.0,545.0 C2099.7,561.2 2091.7,574.7 2089.0,591.0 C2086.3,607.3 2085.7,634.3 2085.0,643.0" fill="none" stroke="#cbc7c2" stroke-width="1.5" stroke-linecap="round" stroke-linejoin="round" />
<path d="M1941.0,295.0 C1944.2,293.8 1951.7,285.3 1960.0,288.0 C1968.3,290.7 1980.5,302.0 1991.0,311.0 C2001.5,320.0 2013.2,331.7 2023.0,342.0 C2032.8,352.3 2043.5,363.2 2050.0,373.0 C2056.5,382.8 2060.0,385.3 2062.0,401.0 C2064.0,416.7 2062.0,456.0 2062.0,467.0" fill="none" stroke="#cbc7c2" stroke-width="1.5" stroke-linecap="round" stroke-linejoin="round" />
<path d="M1976.0,260.0 C1972.2,267.2 1958.8,290.7 1953.0,303.0 C1947.2,315.3 1942.3,317.2 1941.0,334.0 C1939.7,350.8 1943.7,380.5 1945.0,404.0 C1946.3,427.5 1951.7,461.3 1949.0,475.0 C1946.3,488.7 1933.0,473.0 1929.0,486.0 C1925.0,499.0 1927.5,537.3 1925.0,553.0 C1922.5,568.7 1920.5,573.0 1914.0,580.0 C1907.5,587.0 1891.0,584.5 1886.0,595.0 C1881.0,605.5 1884.3,635.0 1884.0,643.0" fill="none" stroke="#cbc7c2" stroke-width="1.5" stroke-linecap="round" stroke-linejoin="round" />
<path d="M1999.0,416.0 C2003.0,420.0 2013.8,431.5 2023.0,440.0 C2032.2,448.5 2042.3,458.0 2054.0,467.0 C2065.7,476.0 2078.7,488.2 2093.0,494.0 C2107.3,499.8 2123.2,500.0 2140.0,502.0 C2156.8,504.0 2181.2,502.8 2194.0,506.0 C2206.8,509.2 2206.7,512.0 2217.0,521.0 C2227.3,530.0 2239.7,554.7 2256.0,560.0 C2272.3,565.3 2298.0,554.8 2315.0,553.0 C2332.0,551.2 2346.5,547.8 2358.0,549.0 C2369.5,550.2 2379.7,558.2 2384.0,560.0" fill="none" stroke="#cbc7c2" stroke-width="1.5" stroke-linecap="round" stroke-linejoin="round" />
<path d="M2330.0,428.0 C2330.7,429.3 2329.3,428.2 2334.0,436.0 C2338.7,443.8 2352.2,462.0 2358.0,475.0 C2363.8,488.0 2369.7,501.0 2369.0,514.0 C2368.3,527.0 2356.5,546.5 2354.0,553.0" fill="none" stroke="#cbc7c2" stroke-width="1.5" stroke-linecap="round" stroke-linejoin="round" />
<path d="M2350.0,342.0 L2373.0,334.0" fill="none" stroke="#cbc7c2" stroke-width="1.5" stroke-linecap="round" stroke-linejoin="round" />
<path d="M2350.0,338.0 C2352.5,328.3 2361.2,299.5 2365.0,280.0 C2368.8,260.5 2369.8,234.0 2373.0,221.0 C2376.2,208.0 2382.2,205.2 2384.0,202.0" fill="none" stroke="#cbc7c2" stroke-width="1.5" stroke-linecap="round" stroke-linejoin="round" />
<path d="M2042.0,202.0 C2042.0,205.8 2038.7,221.2 2042.0,225.0 C2045.3,228.8 2054.8,228.8 2062.0,225.0 C2069.2,221.2 2078.5,212.3 2085.0,202.0 C2091.5,191.7 2098.3,169.5 2101.0,163.0" fill="none" stroke="#cbc7c2" stroke-width="1.5" stroke-linecap="round" stroke-linejoin="round" />
<path d="M2186.0,463.0 C2190.0,466.2 2204.8,472.3 2210.0,482.0 C2215.2,491.7 2215.8,514.5 2217.0,521.0" fill="none" stroke="#cbc7c2" stroke-width="1.5" stroke-linecap="round" stroke-linejoin="round" />
<path d="M2194.0,556.0 L2194.0,592.0" fill="none" stroke="#cbc7c2" stroke-width="1.5" stroke-linecap="round" stroke-linejoin="round" />
<path d="M1600.0,163.0 C1606.7,165.8 1623.3,173.8 1640.0,180.0 C1656.7,186.2 1683.3,193.3 1700.0,200.0 C1716.7,206.7 1729.2,222.3 1740.0,220.0 C1750.8,217.7 1757.5,195.5 1765.0,186.0 C1772.5,176.5 1781.7,166.8 1785.0,163.0" fill="none" stroke="#cbc7c2" stroke-width="1.5" stroke-linecap="round" stroke-linejoin="round" />
<path d="M1680.0,163.0 C1679.7,174.2 1683.0,207.2 1678.0,230.0 C1673.0,252.8 1656.3,278.3 1650.0,300.0 C1643.7,321.7 1640.0,343.3 1640.0,360.0 C1640.0,376.7 1648.3,393.3 1650.0,400.0" fill="none" stroke="#cbc7c2" stroke-width="1.5" stroke-linecap="round" stroke-linejoin="round" />
<path d="M1750.0,163.0 C1749.2,177.5 1746.7,222.2 1745.0,250.0 C1743.3,277.8 1740.5,304.5 1740.0,330.0 C1739.5,355.5 1740.3,378.8 1742.0,403.0 C1743.7,427.2 1748.7,463.0 1750.0,475.0" fill="none" stroke="#cbc7c2" stroke-width="1.5" stroke-linecap="round" stroke-linejoin="round" />
<path d="M1286.0,358.0 C1291.0,356.3 1304.5,354.5 1316.0,348.0 C1327.5,341.5 1340.5,327.8 1355.0,319.0 C1369.5,310.2 1388.5,304.2 1403.0,295.0 C1417.5,285.8 1429.0,273.0 1442.0,264.0 C1455.0,255.0 1466.3,251.3 1481.0,241.0 C1495.7,230.7 1510.2,214.3 1530.0,202.0 C1549.8,189.7 1588.3,172.8 1600.0,167.0" fill="none" stroke="#cbc7c2" stroke-width="1.5" stroke-linecap="round" stroke-linejoin="round" />
<path d="M1384.0,163.0 C1385.7,166.2 1387.5,175.5 1394.0,182.0 C1400.5,188.5 1413.3,193.8 1423.0,202.0 C1432.7,210.2 1444.2,223.2 1452.0,231.0 C1459.8,238.8 1461.8,242.2 1470.0,249.0 C1478.2,255.8 1494.3,265.5 1501.0,272.0 C1507.7,278.5 1503.5,283.5 1510.0,288.0 C1516.5,292.5 1535.0,297.2 1540.0,299.0" fill="none" stroke="#cbc7c2" stroke-width="1.5" stroke-linecap="round" stroke-linejoin="round" />
<path d="M1200.0,420.0 C1210.0,416.7 1240.0,406.7 1260.0,400.0 C1280.0,393.3 1298.3,386.7 1320.0,380.0 C1341.7,373.3 1378.3,363.3 1390.0,360.0" fill="none" stroke="#cbc7c2" stroke-width="1.5" stroke-linecap="round" stroke-linejoin="round" />
<path d="M1330.0,450.0 C1340.0,458.3 1370.0,488.3 1390.0,500.0 C1410.0,511.7 1428.3,515.0 1450.0,520.0 C1471.7,525.0 1495.0,530.0 1520.0,530.0 C1545.0,530.0 1586.7,521.7 1600.0,520.0" fill="none" stroke="#cbc7c2" stroke-width="1.5" stroke-linecap="round" stroke-linejoin="round" />
<path d="M1440.0,540.0 C1446.7,543.3 1463.3,550.0 1480.0,560.0 C1496.7,570.0 1526.7,586.3 1540.0,600.0 C1553.3,613.7 1556.7,635.0 1560.0,642.0" fill="none" stroke="#cbc7c2" stroke-width="1.5" stroke-linecap="round" stroke-linejoin="round" />
<path d="M1630.0,520.0 C1633.3,533.3 1645.0,579.7 1650.0,600.0 C1655.0,620.3 1658.3,635.0 1660.0,642.0" fill="none" stroke="#cbc7c2" stroke-width="1.5" stroke-linecap="round" stroke-linejoin="round" />
<path d="M70.0,163.0 C78.3,177.5 106.7,227.2 120.0,250.0 C133.3,272.8 146.7,278.3 150.0,300.0 C153.3,321.7 145.0,360.0 140.0,380.0 C135.0,400.0 123.3,413.3 120.0,420.0" fill="none" stroke="#cbc7c2" stroke-width="1.5" stroke-linecap="round" stroke-linejoin="round" />
<path d="M18.0,330.0 C28.3,332.5 56.3,338.3 80.0,345.0 C103.7,351.7 135.0,363.3 160.0,370.0 C185.0,376.7 218.3,382.5 230.0,385.0" fill="none" stroke="#cbc7c2" stroke-width="1.5" stroke-linecap="round" stroke-linejoin="round" />
<path d="M160.0,163.0 C163.3,174.2 173.3,207.2 180.0,230.0 C186.7,252.8 194.2,275.0 200.0,300.0 C205.8,325.0 210.0,355.0 215.0,380.0 C220.0,405.0 222.5,426.7 230.0,450.0 C237.5,473.3 255.0,508.3 260.0,520.0" fill="none" stroke="#cbc7c2" stroke-width="1.5" stroke-linecap="round" stroke-linejoin="round" />
<path d="M230.0,163.0 C231.7,177.5 236.7,223.8 240.0,250.0 C243.3,276.2 248.3,308.3 250.0,320.0" fill="none" stroke="#cbc7c2" stroke-width="1.5" stroke-linecap="round" stroke-linejoin="round" />
<path d="M120.0,480.0 C125.0,478.3 136.7,470.0 150.0,470.0 C163.3,470.0 183.3,475.0 200.0,480.0 C216.7,485.0 235.0,490.0 250.0,500.0 C265.0,510.0 283.3,533.3 290.0,540.0" fill="none" stroke="#cbc7c2" stroke-width="1.5" stroke-linecap="round" stroke-linejoin="round" />
<path d="M150.0,560.0 C156.7,560.0 175.0,555.0 190.0,560.0 C205.0,565.0 225.0,580.0 240.0,590.0 C255.0,600.0 273.3,615.0 280.0,620.0" fill="none" stroke="#cbc7c2" stroke-width="1.5" stroke-linecap="round" stroke-linejoin="round" />
<path d="M40.0,643.0 C46.7,639.2 63.3,625.5 80.0,620.0 C96.7,614.5 120.0,610.0 140.0,610.0 C160.0,610.0 190.0,618.3 200.0,620.0" fill="none" stroke="#cbc7c2" stroke-width="1.5" stroke-linecap="round" stroke-linejoin="round" />
<path d="M380.0,163.0 C386.7,169.2 406.7,187.2 420.0,200.0 C433.3,212.8 446.7,223.3 460.0,240.0 C473.3,256.7 488.3,283.3 500.0,300.0 C511.7,316.7 525.0,333.3 530.0,340.0" fill="none" stroke="#cbc7c2" stroke-width="1.5" stroke-linecap="round" stroke-linejoin="round" />
<path d="M250.0,170.0 C258.3,175.0 285.0,190.0 300.0,200.0 C315.0,210.0 326.7,221.7 340.0,230.0 C353.3,238.3 373.3,246.7 380.0,250.0" fill="none" stroke="#cbc7c2" stroke-width="1.5" stroke-linecap="round" stroke-linejoin="round" />
<path d="M425.0,390.0 C430.8,395.0 449.2,408.3 460.0,420.0 C470.8,431.7 480.0,450.0 490.0,460.0 C500.0,470.0 515.0,476.7 520.0,480.0" fill="none" stroke="#cbc7c2" stroke-width="1.5" stroke-linecap="round" stroke-linejoin="round" />
<path d="M1750.0,541.0 C1754.5,542.3 1769.2,541.8 1777.0,549.0 C1784.8,556.2 1788.5,575.0 1797.0,584.0 C1805.5,593.0 1813.2,599.2 1828.0,603.0 C1842.8,606.8 1863.3,601.2 1886.0,607.0 C1908.7,612.8 1951.0,632.8 1964.0,638.0" fill="none" stroke="#9c9c9c" stroke-width="1.8" stroke-linecap="round" stroke-linejoin="round" />
<path d="M310.0,163.0 C308.3,172.5 304.2,197.2 300.0,220.0 C295.8,242.8 287.8,278.3 285.0,300.0 C282.2,321.7 280.5,336.7 283.0,350.0 C285.5,363.3 292.2,368.3 300.0,380.0 C307.8,391.7 320.0,405.0 330.0,420.0 C340.0,435.0 353.3,455.0 360.0,470.0 C366.7,485.0 365.0,495.0 370.0,510.0 C375.0,525.0 381.7,545.0 390.0,560.0 C398.3,575.0 410.0,586.2 420.0,600.0 C430.0,613.8 445.0,635.8 450.0,643.0" fill="none" stroke="#a9a9a9" stroke-width="2" stroke-linecap="round" stroke-linejoin="round" />
<path d="M1250.0,642.0 C1258.3,638.3 1271.7,627.0 1300.0,620.0 C1328.3,613.0 1386.7,605.8 1420.0,600.0 C1453.3,594.2 1470.0,591.7 1500.0,585.0 C1530.0,578.3 1570.0,572.2 1600.0,560.0 C1630.0,547.8 1660.0,520.3 1680.0,512.0 C1700.0,503.7 1708.3,505.2 1720.0,510.0 C1731.7,514.8 1745.0,535.8 1750.0,541.0" fill="none" stroke="#9c9c9c" stroke-width="1.8" stroke-linecap="round" stroke-linejoin="round" />
<path d="M700.0,268.0 C709.7,270.0 738.5,277.3 758.0,280.0 C777.5,282.7 799.0,282.3 817.0,284.0 C835.0,285.7 853.0,286.2 866.0,290.0 C879.0,293.8 887.7,304.8 895.0,307.0 C902.3,309.2 902.5,311.3 910.0,303.0 C917.5,294.7 926.3,262.2 940.0,257.0 C953.7,251.8 975.2,265.0 992.0,272.0 C1008.8,279.0 1028.0,289.5 1041.0,299.0 C1054.0,308.5 1062.5,319.2 1070.0,329.0 C1077.5,338.8 1081.0,346.2 1086.0,358.0 C1091.0,369.8 1097.7,393.0 1100.0,400.0" fill="none" stroke="#e8b36f" stroke-width="4.800000000000001" stroke-linecap="round" stroke-linejoin="round"/>
<path d="M700.0,268.0 C709.7,270.0 738.5,277.3 758.0,280.0 C777.5,282.7 799.0,282.3 817.0,284.0 C835.0,285.7 853.0,286.2 866.0,290.0 C879.0,293.8 887.7,304.8 895.0,307.0 C902.3,309.2 902.5,311.3 910.0,303.0 C917.5,294.7 926.3,262.2 940.0,257.0 C953.7,251.8 975.2,265.0 992.0,272.0 C1008.8,279.0 1028.0,289.5 1041.0,299.0 C1054.0,308.5 1062.5,319.2 1070.0,329.0 C1077.5,338.8 1081.0,346.2 1086.0,358.0 C1091.0,369.8 1097.7,393.0 1100.0,400.0" fill="none" stroke="#f6c98e" stroke-width="3.2" stroke-linecap="round" stroke-linejoin="round" />
<path d="M675.0,370.0 C686.3,369.7 725.8,367.2 743.0,368.0 C760.2,368.8 765.5,374.7 778.0,375.0 C790.5,375.3 803.0,369.5 818.0,370.0 C833.0,370.5 855.5,372.5 868.0,378.0 C880.5,383.5 884.7,402.7 893.0,403.0 C901.3,403.3 905.5,385.0 918.0,380.0 C930.5,375.0 959.7,374.2 968.0,373.0" fill="none" stroke="#e8b36f" stroke-width="4.800000000000001" stroke-linecap="round" stroke-linejoin="round"/>
<path d="M675.0,370.0 C686.3,369.7 725.8,367.2 743.0,368.0 C760.2,368.8 765.5,374.7 778.0,375.0 C790.5,375.3 803.0,369.5 818.0,370.0 C833.0,370.5 855.5,372.5 868.0,378.0 C880.5,383.5 884.7,402.7 893.0,403.0 C901.3,403.3 905.5,385.0 918.0,380.0 C930.5,375.0 959.7,374.2 968.0,373.0" fill="none" stroke="#f6c98e" stroke-width="3.2" stroke-linecap="round" stroke-linejoin="round" />
<path d="M703.0,393.0 C713.8,395.0 752.2,401.3 768.0,405.0 C783.8,408.7 785.5,413.3 798.0,415.0 C810.5,416.7 828.8,413.3 843.0,415.0 C857.2,416.7 863.0,421.7 883.0,425.0 C903.0,428.3 940.5,433.3 963.0,435.0 C985.5,436.7 1000.5,437.8 1018.0,435.0 C1035.5,432.2 1051.3,421.7 1068.0,418.0 C1084.7,414.3 1109.7,413.8 1118.0,413.0" fill="none" stroke="#e8b36f" stroke-width="4.800000000000001" stroke-linecap="round" stroke-linejoin="round"/>
<path d="M703.0,393.0 C713.8,395.0 752.2,401.3 768.0,405.0 C783.8,408.7 785.5,413.3 798.0,415.0 C810.5,416.7 828.8,413.3 843.0,415.0 C857.2,416.7 863.0,421.7 883.0,425.0 C903.0,428.3 940.5,433.3 963.0,435.0 C985.5,436.7 1000.5,437.8 1018.0,435.0 C1035.5,432.2 1051.3,421.7 1068.0,418.0 C1084.7,414.3 1109.7,413.8 1118.0,413.0" fill="none" stroke="#f6c98e" stroke-width="3.2" stroke-linecap="round" stroke-linejoin="round" />
<path d="M793.0,418.0 C792.5,426.3 787.5,453.5 790.0,468.0 C792.5,482.5 802.2,495.0 808.0,505.0 C813.8,515.0 819.2,522.5 825.0,528.0 C830.8,533.5 838.0,532.7 843.0,538.0 C848.0,543.3 852.5,550.8 855.0,560.0 C857.5,569.2 857.5,579.2 858.0,593.0 C858.5,606.8 858.0,634.7 858.0,643.0" fill="none" stroke="#e8b36f" stroke-width="4.800000000000001" stroke-linecap="round" stroke-linejoin="round"/>
<path d="M793.0,418.0 C792.5,426.3 787.5,453.5 790.0,468.0 C792.5,482.5 802.2,495.0 808.0,505.0 C813.8,515.0 819.2,522.5 825.0,528.0 C830.8,533.5 838.0,532.7 843.0,538.0 C848.0,543.3 852.5,550.8 855.0,560.0 C857.5,569.2 857.5,579.2 858.0,593.0 C858.5,606.8 858.0,634.7 858.0,643.0" fill="none" stroke="#f6c98e" stroke-width="3.2" stroke-linecap="round" stroke-linejoin="round" />
<path d="M960.0,430.0 C960.0,438.3 962.0,465.3 960.0,480.0 C958.0,494.7 955.0,507.5 948.0,518.0 C941.0,528.5 925.5,534.7 918.0,543.0 C910.5,551.3 908.0,555.5 903.0,568.0 C898.0,580.5 890.5,609.7 888.0,618.0" fill="none" stroke="#e8b36f" stroke-width="4.800000000000001" stroke-linecap="round" stroke-linejoin="round"/>
<path d="M960.0,430.0 C960.0,438.3 962.0,465.3 960.0,480.0 C958.0,494.7 955.0,507.5 948.0,518.0 C941.0,528.5 925.5,534.7 918.0,543.0 C910.5,551.3 908.0,555.5 903.0,568.0 C898.0,580.5 890.5,609.7 888.0,618.0" fill="none" stroke="#f6c98e" stroke-width="3.2" stroke-linecap="round" stroke-linejoin="round" />
<path d="M1008.0,438.0 C1012.2,444.7 1027.2,462.7 1033.0,478.0 C1038.8,493.3 1039.7,510.8 1043.0,530.0 C1046.3,549.2 1050.5,574.2 1053.0,593.0 C1055.5,611.8 1057.2,634.7 1058.0,643.0" fill="none" stroke="#e8b36f" stroke-width="4.800000000000001" stroke-linecap="round" stroke-linejoin="round"/>
<path d="M1008.0,438.0 C1012.2,444.7 1027.2,462.7 1033.0,478.0 C1038.8,493.3 1039.7,510.8 1043.0,530.0 C1046.3,549.2 1050.5,574.2 1053.0,593.0 C1055.5,611.8 1057.2,634.7 1058.0,643.0" fill="none" stroke="#f6c98e" stroke-width="3.2" stroke-linecap="round" stroke-linejoin="round" />
<path d="M758.0,573.0 C768.8,573.8 806.8,576.8 823.0,578.0 C839.2,579.2 839.2,583.8 855.0,580.0 C870.8,576.2 890.8,560.8 918.0,555.0 C945.2,549.2 993.0,546.2 1018.0,545.0 C1043.0,543.8 1053.8,550.0 1068.0,548.0 C1082.2,546.0 1097.2,535.5 1103.0,533.0" fill="none" stroke="#e8b36f" stroke-width="4.800000000000001" stroke-linecap="round" stroke-linejoin="round"/>
<path d="M758.0,573.0 C768.8,573.8 806.8,576.8 823.0,578.0 C839.2,579.2 839.2,583.8 855.0,580.0 C870.8,576.2 890.8,560.8 918.0,555.0 C945.2,549.2 993.0,546.2 1018.0,545.0 C1043.0,543.8 1053.8,550.0 1068.0,548.0 C1082.2,546.0 1097.2,535.5 1103.0,533.0" fill="none" stroke="#f6c98e" stroke-width="3.2" stroke-linecap="round" stroke-linejoin="round" />
<path d="M930.0,478.0 C940.5,477.5 978.3,473.3 993.0,475.0 C1007.7,476.7 1001.3,486.7 1018.0,488.0 C1034.7,489.3 1078.5,490.5 1093.0,483.0 C1107.5,475.5 1100.8,450.5 1105.0,443.0 C1109.2,435.5 1115.8,438.8 1118.0,438.0" fill="none" stroke="#e8b36f" stroke-width="4.800000000000001" stroke-linecap="round" stroke-linejoin="round"/>
<path d="M930.0,478.0 C940.5,477.5 978.3,473.3 993.0,475.0 C1007.7,476.7 1001.3,486.7 1018.0,488.0 C1034.7,489.3 1078.5,490.5 1093.0,483.0 C1107.5,475.5 1100.8,450.5 1105.0,443.0 C1109.2,435.5 1115.8,438.8 1118.0,438.0" fill="none" stroke="#f6c98e" stroke-width="3.2" stroke-linecap="round" stroke-linejoin="round" />
<path d="M718.0,493.0 C717.5,509.7 715.0,568.0 715.0,593.0 C715.0,618.0 717.5,634.7 718.0,643.0" fill="none" stroke="#e8b36f" stroke-width="4.800000000000001" stroke-linecap="round" stroke-linejoin="round"/>
<path d="M718.0,493.0 C717.5,509.7 715.0,568.0 715.0,593.0 C715.0,618.0 717.5,634.7 718.0,643.0" fill="none" stroke="#f6c98e" stroke-width="3.2" stroke-linecap="round" stroke-linejoin="round" />
<path d="M823.0,343.0 C824.2,348.3 821.7,365.8 830.0,375.0 C838.3,384.2 862.5,393.3 873.0,398.0 C883.5,402.7 889.7,402.2 893.0,403.0" fill="none" stroke="#e8b36f" stroke-width="4.800000000000001" stroke-linecap="round" stroke-linejoin="round"/>
<path d="M823.0,343.0 C824.2,348.3 821.7,365.8 830.0,375.0 C838.3,384.2 862.5,393.3 873.0,398.0 C883.5,402.7 889.7,402.2 893.0,403.0" fill="none" stroke="#f6c98e" stroke-width="3.2" stroke-linecap="round" stroke-linejoin="round" />
<path d="M968.0,343.0 C968.8,349.2 973.0,367.5 973.0,380.0 C973.0,392.5 969.7,401.7 968.0,418.0 C966.3,434.3 963.8,468.0 963.0,478.0" fill="none" stroke="#e8b36f" stroke-width="4.800000000000001" stroke-linecap="round" stroke-linejoin="round"/>
<path d="M968.0,343.0 C968.8,349.2 973.0,367.5 973.0,380.0 C973.0,392.5 969.7,401.7 968.0,418.0 C966.3,434.3 963.8,468.0 963.0,478.0" fill="none" stroke="#f6c98e" stroke-width="3.2" stroke-linecap="round" stroke-linejoin="round" />
<path d="M815.0,284.0 C815.3,289.8 815.3,309.2 817.0,319.0 C818.7,328.8 823.7,339.0 825.0,343.0" fill="none" stroke="#e8b36f" stroke-width="4.800000000000001" stroke-linecap="round" stroke-linejoin="round"/>
<path d="M815.0,284.0 C815.3,289.8 815.3,309.2 817.0,319.0 C818.7,328.8 823.7,339.0 825.0,343.0" fill="none" stroke="#f6c98e" stroke-width="3.2" stroke-linecap="round" stroke-linejoin="round" />
<path d="M959.0,280.0 C960.0,283.2 965.0,290.8 965.0,299.0 C965.0,307.2 958.5,321.7 959.0,329.0 C959.5,336.3 966.5,340.7 968.0,343.0" fill="none" stroke="#e8b36f" stroke-width="4.800000000000001" stroke-linecap="round" stroke-linejoin="round"/>
<path d="M959.0,280.0 C960.0,283.2 965.0,290.8 965.0,299.0 C965.0,307.2 958.5,321.7 959.0,329.0 C959.5,336.3 966.5,340.7 968.0,343.0" fill="none" stroke="#f6c98e" stroke-width="3.2" stroke-linecap="round" stroke-linejoin="round" />
<path d="M215.0,163.0 C216.0,164.0 213.2,166.0 221.0,169.0 C228.8,172.0 250.7,175.5 262.0,181.0 C273.3,186.5 284.5,198.5 289.0,202.0" fill="none" stroke="#e8b36f" stroke-width="4.800000000000001" stroke-linecap="round" stroke-linejoin="round"/>
<path d="M215.0,163.0 C216.0,164.0 213.2,166.0 221.0,169.0 C228.8,172.0 250.7,175.5 262.0,181.0 C273.3,186.5 284.5,198.5 289.0,202.0" fill="none" stroke="#f6c98e" stroke-width="3.2" stroke-linecap="round" stroke-linejoin="round" />
<path d="M295.0,163.0 C294.3,169.5 293.7,185.8 291.0,202.0 C288.3,218.2 282.3,243.8 279.0,260.0 C275.7,276.2 271.7,287.5 271.0,299.0 C270.3,310.5 273.0,305.8 275.0,329.0 C277.0,352.2 274.7,408.5 283.0,438.0 C291.3,467.5 316.5,479.3 325.0,506.0 C333.5,532.7 332.8,575.2 334.0,598.0 C335.2,620.8 332.3,635.5 332.0,643.0" fill="none" stroke="#e8b36f" stroke-width="4.800000000000001" stroke-linecap="round" stroke-linejoin="round"/>
<path d="M295.0,163.0 C294.3,169.5 293.7,185.8 291.0,202.0 C288.3,218.2 282.3,243.8 279.0,260.0 C275.7,276.2 271.7,287.5 271.0,299.0 C270.3,310.5 273.0,305.8 275.0,329.0 C277.0,352.2 274.7,408.5 283.0,438.0 C291.3,467.5 316.5,479.3 325.0,506.0 C333.5,532.7 332.8,575.2 334.0,598.0 C335.2,620.8 332.3,635.5 332.0,643.0" fill="none" stroke="#f6c98e" stroke-width="3.2" stroke-linecap="round" stroke-linejoin="round" />
<path d="M410.0,163.0 C408.0,167.8 402.7,180.7 398.0,192.0 C393.3,203.3 385.5,216.3 382.0,231.0 C378.5,245.7 376.7,266.0 377.0,280.0 C377.3,294.0 383.5,302.0 384.0,315.0 C384.5,328.0 379.3,343.3 380.0,358.0 C380.7,372.7 386.0,387.7 388.0,403.0 C390.0,418.3 392.3,430.5 392.0,450.0 C391.7,469.5 387.3,487.8 386.0,520.0 C384.7,552.2 384.3,622.5 384.0,643.0" fill="none" stroke="#e8b36f" stroke-width="4.800000000000001" stroke-linecap="round" stroke-linejoin="round"/>
<path d="M410.0,163.0 C408.0,167.8 402.7,180.7 398.0,192.0 C393.3,203.3 385.5,216.3 382.0,231.0 C378.5,245.7 376.7,266.0 377.0,280.0 C377.3,294.0 383.5,302.0 384.0,315.0 C384.5,328.0 379.3,343.3 380.0,358.0 C380.7,372.7 386.0,387.7 388.0,403.0 C390.0,418.3 392.3,430.5 392.0,450.0 C391.7,469.5 387.3,487.8 386.0,520.0 C384.7,552.2 384.3,622.5 384.0,643.0" fill="none" stroke="#f6c98e" stroke-width="3.2" stroke-linecap="round" stroke-linejoin="round" />
<path d="M353.0,309.0 L349.0,368.0" fill="none" stroke="#e8b36f" stroke-width="4.800000000000001" stroke-linecap="round" stroke-linejoin="round"/>
<path d="M353.0,309.0 L349.0,368.0" fill="none" stroke="#f6c98e" stroke-width="3.2" stroke-linecap="round" stroke-linejoin="round" />
<path d="M300.0,623.0 C308.2,620.2 331.0,610.2 349.0,606.0 C367.0,601.8 388.2,595.2 408.0,598.0 C427.8,600.8 458.0,618.8 468.0,623.0" fill="none" stroke="#e8b36f" stroke-width="4.800000000000001" stroke-linecap="round" stroke-linejoin="round"/>
<path d="M300.0,623.0 C308.2,620.2 331.0,610.2 349.0,606.0 C367.0,601.8 388.2,595.2 408.0,598.0 C427.8,600.8 458.0,618.8 468.0,623.0" fill="none" stroke="#f6c98e" stroke-width="3.2" stroke-linecap="round" stroke-linejoin="round" />
<path d="M480.0,535.0 C484.7,533.2 496.2,526.5 508.0,524.0 C519.8,521.5 541.2,519.3 551.0,520.0 C560.8,520.7 558.8,521.3 567.0,528.0 C575.2,534.7 587.8,551.3 600.0,560.0 C612.2,568.7 633.3,576.7 640.0,580.0" fill="none" stroke="#e8b36f" stroke-width="4.800000000000001" stroke-linecap="round" stroke-linejoin="round"/>
<path d="M480.0,535.0 C484.7,533.2 496.2,526.5 508.0,524.0 C519.8,521.5 541.2,519.3 551.0,520.0 C560.8,520.7 558.8,521.3 567.0,528.0 C575.2,534.7 587.8,551.3 600.0,560.0 C612.2,568.7 633.3,576.7 640.0,580.0" fill="none" stroke="#f6c98e" stroke-width="3.2" stroke-linecap="round" stroke-linejoin="round" />
<path d="M1373.0,569.0 C1382.2,569.5 1413.0,568.8 1428.0,572.0 C1443.0,575.2 1452.3,579.8 1463.0,588.0 C1473.7,596.2 1482.5,615.0 1492.0,621.0 C1501.5,627.0 1508.0,631.8 1520.0,624.0 C1532.0,616.2 1549.8,591.3 1564.0,574.0 C1578.2,556.7 1585.5,533.3 1605.0,520.0 C1624.5,506.7 1661.8,494.0 1681.0,494.0 C1700.2,494.0 1705.3,512.5 1720.0,520.0 C1734.7,527.5 1755.7,535.7 1769.0,539.0 C1782.3,542.3 1785.2,530.5 1800.0,540.0 C1814.8,549.5 1836.8,583.7 1858.0,596.0 C1879.2,608.3 1909.0,607.2 1927.0,614.0 C1945.0,620.8 1959.5,633.2 1966.0,637.0" fill="none" stroke="#e8b36f" stroke-width="4.800000000000001" stroke-linecap="round" stroke-linejoin="round"/>
<path d="M1373.0,569.0 C1382.2,569.5 1413.0,568.8 1428.0,572.0 C1443.0,575.2 1452.3,579.8 1463.0,588.0 C1473.7,596.2 1482.5,615.0 1492.0,621.0 C1501.5,627.0 1508.0,631.8 1520.0,624.0 C1532.0,616.2 1549.8,591.3 1564.0,574.0 C1578.2,556.7 1585.5,533.3 1605.0,520.0 C1624.5,506.7 1661.8,494.0 1681.0,494.0 C1700.2,494.0 1705.3,512.5 1720.0,520.0 C1734.7,527.5 1755.7,535.7 1769.0,539.0 C1782.3,542.3 1785.2,530.5 1800.0,540.0 C1814.8,549.5 1836.8,583.7 1858.0,596.0 C1879.2,608.3 1909.0,607.2 1927.0,614.0 C1945.0,620.8 1959.5,633.2 1966.0,637.0" fill="none" stroke="#f6c98e" stroke-width="3.2" stroke-linecap="round" stroke-linejoin="round" />
<path d="M1613.0,481.0 L1629.0,510.0" fill="none" stroke="#e8b36f" stroke-width="4.800000000000001" stroke-linecap="round" stroke-linejoin="round"/>
<path d="M1613.0,481.0 L1629.0,510.0" fill="none" stroke="#f6c98e" stroke-width="3.2" stroke-linecap="round" stroke-linejoin="round" />
<path d="M1834.0,163.0 C1840.5,165.7 1861.3,172.2 1873.0,179.0 C1884.7,185.8 1895.0,195.7 1904.0,204.0 C1913.0,212.3 1915.0,223.7 1927.0,229.0 C1939.0,234.3 1961.5,239.2 1976.0,236.0 C1990.5,232.8 2002.7,216.2 2014.0,210.0 C2025.3,203.8 2033.8,202.7 2044.0,199.0 C2054.2,195.3 2066.0,194.0 2075.0,188.0 C2084.0,182.0 2094.2,167.2 2098.0,163.0" fill="none" stroke="#e8b36f" stroke-width="4.800000000000001" stroke-linecap="round" stroke-linejoin="round"/>
<path d="M1834.0,163.0 C1840.5,165.7 1861.3,172.2 1873.0,179.0 C1884.7,185.8 1895.0,195.7 1904.0,204.0 C1913.0,212.3 1915.0,223.7 1927.0,229.0 C1939.0,234.3 1961.5,239.2 1976.0,236.0 C1990.5,232.8 2002.7,216.2 2014.0,210.0 C2025.3,203.8 2033.8,202.7 2044.0,199.0 C2054.2,195.3 2066.0,194.0 2075.0,188.0 C2084.0,182.0 2094.2,167.2 2098.0,163.0" fill="none" stroke="#f6c98e" stroke-width="3.2" stroke-linecap="round" stroke-linejoin="round" />
<path d="M1179.0,163.0 C1180.0,169.5 1184.8,189.2 1185.0,202.0 C1185.2,214.8 1182.0,229.5 1180.0,240.0 C1178.0,250.5 1178.0,258.3 1173.0,265.0 C1168.0,271.7 1153.8,277.5 1150.0,280.0" fill="none" stroke="#e8b36f" stroke-width="4.800000000000001" stroke-linecap="round" stroke-linejoin="round"/>
<path d="M1179.0,163.0 C1180.0,169.5 1184.8,189.2 1185.0,202.0 C1185.2,214.8 1182.0,229.5 1180.0,240.0 C1178.0,250.5 1178.0,258.3 1173.0,265.0 C1168.0,271.7 1153.8,277.5 1150.0,280.0" fill="none" stroke="#f6c98e" stroke-width="3.2" stroke-linecap="round" stroke-linejoin="round" />
<path d="M1259.0,247.0 C1265.2,242.7 1287.5,226.8 1296.0,221.0 C1304.5,215.2 1306.0,214.7 1310.0,212.0 C1314.0,209.3 1318.3,206.2 1320.0,205.0" fill="none" stroke="#e8b36f" stroke-width="4.800000000000001" stroke-linecap="round" stroke-linejoin="round"/>
<path d="M1259.0,247.0 C1265.2,242.7 1287.5,226.8 1296.0,221.0 C1304.5,215.2 1306.0,214.7 1310.0,212.0 C1314.0,209.3 1318.3,206.2 1320.0,205.0" fill="none" stroke="#f6c98e" stroke-width="3.2" stroke-linecap="round" stroke-linejoin="round" />
<path d="M1306.0,239.0 C1308.5,243.2 1318.2,256.5 1321.0,264.0 C1323.8,271.5 1323.7,271.7 1323.0,284.0 C1322.3,296.3 1318.8,318.2 1317.0,338.0 C1315.2,357.8 1312.8,392.2 1312.0,403.0" fill="none" stroke="#e8b36f" stroke-width="4.800000000000001" stroke-linecap="round" stroke-linejoin="round"/>
<path d="M1306.0,239.0 C1308.5,243.2 1318.2,256.5 1321.0,264.0 C1323.8,271.5 1323.7,271.7 1323.0,284.0 C1322.3,296.3 1318.8,318.2 1317.0,338.0 C1315.2,357.8 1312.8,392.2 1312.0,403.0" fill="none" stroke="#f6c98e" stroke-width="3.2" stroke-linecap="round" stroke-linejoin="round" />
<path d="M1167.0,332.0 L1214.0,350.0" fill="none" stroke="#e8b36f" stroke-width="4.800000000000001" stroke-linecap="round" stroke-linejoin="round"/>
<path d="M1167.0,332.0 L1214.0,350.0" fill="none" stroke="#f6c98e" stroke-width="3.2" stroke-linecap="round" stroke-linejoin="round" />
<path d="M1243.0,292.0 C1243.3,296.5 1243.3,309.7 1245.0,319.0 C1246.7,328.3 1252.3,336.7 1253.0,348.0 C1253.7,359.3 1249.7,380.5 1249.0,387.0" fill="none" stroke="#e8b36f" stroke-width="4.800000000000001" stroke-linecap="round" stroke-linejoin="round"/>
<path d="M1243.0,292.0 C1243.3,296.5 1243.3,309.7 1245.0,319.0 C1246.7,328.3 1252.3,336.7 1253.0,348.0 C1253.7,359.3 1249.7,380.5 1249.0,387.0" fill="none" stroke="#f6c98e" stroke-width="3.2" stroke-linecap="round" stroke-linejoin="round" />
<path d="M1000.0,520.0 C1008.3,523.3 1033.3,533.3 1050.0,540.0 C1066.7,546.7 1085.8,550.0 1100.0,560.0 C1114.2,570.0 1128.3,586.3 1135.0,600.0 C1141.7,613.7 1139.2,635.0 1140.0,642.0" fill="none" stroke="#e8b36f" stroke-width="4.800000000000001" stroke-linecap="round" stroke-linejoin="round"/>
<path d="M1000.0,520.0 C1008.3,523.3 1033.3,533.3 1050.0,540.0 C1066.7,546.7 1085.8,550.0 1100.0,560.0 C1114.2,570.0 1128.3,586.3 1135.0,600.0 C1141.7,613.7 1139.2,635.0 1140.0,642.0" fill="none" stroke="#f6c98e" stroke-width="3.2" stroke-linecap="round" stroke-linejoin="round" />
<path d="M640.0,580.0 C650.0,581.7 680.0,586.7 700.0,590.0 C720.0,593.3 743.3,595.0 760.0,600.0 C776.7,605.0 783.3,613.0 800.0,620.0 C816.7,627.0 850.0,638.3 860.0,642.0" fill="none" stroke="#e8b36f" stroke-width="4.800000000000001" stroke-linecap="round" stroke-linejoin="round"/>
<path d="M640.0,580.0 C650.0,581.7 680.0,586.7 700.0,590.0 C720.0,593.3 743.3,595.0 760.0,600.0 C776.7,605.0 783.3,613.0 800.0,620.0 C816.7,627.0 850.0,638.3 860.0,642.0" fill="none" stroke="#f6c98e" stroke-width="3.2" stroke-linecap="round" stroke-linejoin="round" />
<path d="M390.0,520.0 C396.7,518.3 416.7,510.0 430.0,510.0 C443.3,510.0 455.0,511.7 470.0,520.0 C485.0,528.3 511.7,553.3 520.0,560.0" fill="none" stroke="#e8b36f" stroke-width="4.800000000000001" stroke-linecap="round" stroke-linejoin="round"/>
<path d="M390.0,520.0 C396.7,518.3 416.7,510.0 430.0,510.0 C443.3,510.0 455.0,511.7 470.0,520.0 C485.0,528.3 511.7,553.3 520.0,560.0" fill="none" stroke="#f6c98e" stroke-width="3.2" stroke-linecap="round" stroke-linejoin="round" />
<path d="M520.0,560.0 C523.3,566.7 533.3,586.2 540.0,600.0 C546.7,613.8 556.7,635.8 560.0,643.0" fill="none" stroke="#e8b36f" stroke-width="4.800000000000001" stroke-linecap="round" stroke-linejoin="round"/>
<path d="M520.0,560.0 C523.3,566.7 533.3,586.2 540.0,600.0 C546.7,613.8 556.7,635.8 560.0,643.0" fill="none" stroke="#f6c98e" stroke-width="3.2" stroke-linecap="round" stroke-linejoin="round" />
<path d="M600.0,500.0 C601.7,506.7 603.3,526.7 610.0,540.0 C616.7,553.3 635.0,573.3 640.0,580.0" fill="none" stroke="#e8b36f" stroke-width="4.800000000000001" stroke-linecap="round" stroke-linejoin="round"/>
<path d="M600.0,500.0 C601.7,506.7 603.3,526.7 610.0,540.0 C616.7,553.3 635.0,573.3 640.0,580.0" fill="none" stroke="#f6c98e" stroke-width="3.2" stroke-linecap="round" stroke-linejoin="round" />
<path d="M428.0,163.0 C438.7,171.2 474.2,196.7 492.0,212.0 C509.8,227.3 520.7,243.0 535.0,255.0 C549.3,267.0 565.0,274.0 578.0,284.0 C591.0,294.0 600.7,304.0 613.0,315.0 C625.3,326.0 639.0,338.7 652.0,350.0 C665.0,361.3 682.2,374.7 691.0,383.0 C699.8,391.3 690.5,388.0 705.0,400.0 C719.5,412.0 762.5,442.8 778.0,455.0 C793.5,467.2 794.7,470.0 798.0,473.0" fill="none" stroke="#e08c74" stroke-width="5.4" stroke-linecap="round" stroke-linejoin="round"/>
<path d="M428.0,163.0 C438.7,171.2 474.2,196.7 492.0,212.0 C509.8,227.3 520.7,243.0 535.0,255.0 C549.3,267.0 565.0,274.0 578.0,284.0 C591.0,294.0 600.7,304.0 613.0,315.0 C625.3,326.0 639.0,338.7 652.0,350.0 C665.0,361.3 682.2,374.7 691.0,383.0 C699.8,391.3 690.5,388.0 705.0,400.0 C719.5,412.0 762.5,442.8 778.0,455.0 C793.5,467.2 794.7,470.0 798.0,473.0" fill="none" stroke="#f3a68f" stroke-width="3.8" stroke-linecap="round" stroke-linejoin="round" />
<path d="M678.0,553.0 C684.7,545.5 706.3,519.7 718.0,508.0 C729.7,496.3 738.0,492.2 748.0,483.0 C758.0,473.8 766.0,463.0 778.0,453.0 C790.0,443.0 808.2,431.3 820.0,423.0 C831.8,414.7 835.7,411.8 849.0,403.0 C862.3,394.2 882.7,388.5 900.0,370.0 C917.3,351.5 940.2,312.8 953.0,292.0 C965.8,271.2 969.2,260.0 977.0,245.0 C984.8,230.0 991.0,213.0 1000.0,202.0 C1009.0,191.0 1019.3,185.5 1031.0,179.0 C1042.7,172.5 1063.5,165.7 1070.0,163.0" fill="none" stroke="#e08c74" stroke-width="5.4" stroke-linecap="round" stroke-linejoin="round"/>
<path d="M678.0,553.0 C684.7,545.5 706.3,519.7 718.0,508.0 C729.7,496.3 738.0,492.2 748.0,483.0 C758.0,473.8 766.0,463.0 778.0,453.0 C790.0,443.0 808.2,431.3 820.0,423.0 C831.8,414.7 835.7,411.8 849.0,403.0 C862.3,394.2 882.7,388.5 900.0,370.0 C917.3,351.5 940.2,312.8 953.0,292.0 C965.8,271.2 969.2,260.0 977.0,245.0 C984.8,230.0 991.0,213.0 1000.0,202.0 C1009.0,191.0 1019.3,185.5 1031.0,179.0 C1042.7,172.5 1063.5,165.7 1070.0,163.0" fill="none" stroke="#f3a68f" stroke-width="3.8" stroke-linecap="round" stroke-linejoin="round" />
<path d="M778.0,249.0 C777.7,262.5 776.0,296.0 776.0,330.0 C776.0,364.0 777.7,432.5 778.0,453.0" fill="none" stroke="#e08c74" stroke-width="5.4" stroke-linecap="round" stroke-linejoin="round"/>
<path d="M778.0,249.0 C777.7,262.5 776.0,296.0 776.0,330.0 C776.0,364.0 777.7,432.5 778.0,453.0" fill="none" stroke="#f3a68f" stroke-width="3.8" stroke-linecap="round" stroke-linejoin="round" />
<path d="M705.0,393.0 C704.2,401.3 700.0,424.3 700.0,443.0 C700.0,461.7 702.0,484.2 705.0,505.0 C708.0,525.8 715.8,557.5 718.0,568.0" fill="none" stroke="#e08c74" stroke-width="5.4" stroke-linecap="round" stroke-linejoin="round"/>
<path d="M705.0,393.0 C704.2,401.3 700.0,424.3 700.0,443.0 C700.0,461.7 702.0,484.2 705.0,505.0 C708.0,525.8 715.8,557.5 718.0,568.0" fill="none" stroke="#f3a68f" stroke-width="3.8" stroke-linecap="round" stroke-linejoin="round" />
<path d="M853.0,343.0 C855.5,349.2 866.8,365.5 868.0,380.0 C869.2,394.5 860.5,416.2 860.0,430.0 C859.5,443.8 859.5,452.5 865.0,463.0 C870.5,473.5 888.3,488.0 893.0,493.0" fill="none" stroke="#e08c74" stroke-width="5.4" stroke-linecap="round" stroke-linejoin="round"/>
<path d="M853.0,343.0 C855.5,349.2 866.8,365.5 868.0,380.0 C869.2,394.5 860.5,416.2 860.0,430.0 C859.5,443.8 859.5,452.5 865.0,463.0 C870.5,473.5 888.3,488.0 893.0,493.0" fill="none" stroke="#f3a68f" stroke-width="3.8" stroke-linecap="round" stroke-linejoin="round" />
<path d="M900.0,343.0 C904.2,354.7 919.5,393.5 925.0,413.0 C930.5,432.5 934.2,445.0 933.0,460.0 C931.8,475.0 923.0,491.3 918.0,503.0 C913.0,514.7 907.7,519.2 903.0,530.0 C898.3,540.8 892.2,561.7 890.0,568.0" fill="none" stroke="#e08c74" stroke-width="5.4" stroke-linecap="round" stroke-linejoin="round"/>
<path d="M900.0,343.0 C904.2,354.7 919.5,393.5 925.0,413.0 C930.5,432.5 934.2,445.0 933.0,460.0 C931.8,475.0 923.0,491.3 918.0,503.0 C913.0,514.7 907.7,519.2 903.0,530.0 C898.3,540.8 892.2,561.7 890.0,568.0" fill="none" stroke="#f3a68f" stroke-width="3.8" stroke-linecap="round" stroke-linejoin="round" />
<path d="M840.0,264.0 C841.3,269.8 845.8,285.8 848.0,299.0 C850.2,312.2 852.2,335.7 853.0,343.0" fill="none" stroke="#e08c74" stroke-width="5.4" stroke-linecap="round" stroke-linejoin="round"/>
<path d="M840.0,264.0 C841.3,269.8 845.8,285.8 848.0,299.0 C850.2,312.2 852.2,335.7 853.0,343.0" fill="none" stroke="#f3a68f" stroke-width="3.8" stroke-linecap="round" stroke-linejoin="round" />
<path d="M899.0,311.0 L900.0,343.0" fill="none" stroke="#e08c74" stroke-width="5.4" stroke-linecap="round" stroke-linejoin="round"/>
<path d="M899.0,311.0 L900.0,343.0" fill="none" stroke="#f3a68f" stroke-width="3.8" stroke-linecap="round" stroke-linejoin="round" />
<path d="M1095.0,163.0 C1095.2,168.8 1095.8,188.3 1096.0,198.0 C1096.2,207.7 1100.3,209.0 1096.0,221.0 C1091.7,233.0 1077.5,253.7 1070.0,270.0 C1062.5,286.3 1057.5,304.3 1051.0,319.0 C1044.5,333.7 1038.7,352.3 1031.0,358.0 C1023.3,363.7 1009.3,353.8 1005.0,353.0" fill="none" stroke="#e08c74" stroke-width="5.4" stroke-linecap="round" stroke-linejoin="round"/>
<path d="M1095.0,163.0 C1095.2,168.8 1095.8,188.3 1096.0,198.0 C1096.2,207.7 1100.3,209.0 1096.0,221.0 C1091.7,233.0 1077.5,253.7 1070.0,270.0 C1062.5,286.3 1057.5,304.3 1051.0,319.0 C1044.5,333.7 1038.7,352.3 1031.0,358.0 C1023.3,363.7 1009.3,353.8 1005.0,353.0" fill="none" stroke="#f3a68f" stroke-width="3.8" stroke-linecap="round" stroke-linejoin="round" />
<path d="M1005.0,353.0 C1005.5,363.8 1007.2,398.8 1008.0,418.0 C1008.8,437.2 1012.5,451.3 1010.0,468.0 C1007.5,484.7 1001.3,505.5 993.0,518.0 C984.7,530.5 976.7,532.7 960.0,543.0 C943.3,553.3 908.3,567.5 893.0,580.0 C877.7,592.5 873.8,607.5 868.0,618.0 C862.2,628.5 859.7,638.8 858.0,643.0" fill="none" stroke="#e08c74" stroke-width="5.4" stroke-linecap="round" stroke-linejoin="round"/>
<path d="M1005.0,353.0 C1005.5,363.8 1007.2,398.8 1008.0,418.0 C1008.8,437.2 1012.5,451.3 1010.0,468.0 C1007.5,484.7 1001.3,505.5 993.0,518.0 C984.7,530.5 976.7,532.7 960.0,543.0 C943.3,553.3 908.3,567.5 893.0,580.0 C877.7,592.5 873.8,607.5 868.0,618.0 C862.2,628.5 859.7,638.8 858.0,643.0" fill="none" stroke="#f3a68f" stroke-width="3.8" stroke-linecap="round" stroke-linejoin="round" />
<path d="M1080.0,400.0 C1073.8,406.3 1054.7,427.5 1043.0,438.0 C1031.3,448.5 1015.5,458.8 1010.0,463.0" fill="none" stroke="#e08c74" stroke-width="5.4" stroke-linecap="round" stroke-linejoin="round"/>
<path d="M1080.0,400.0 C1073.8,406.3 1054.7,427.5 1043.0,438.0 C1031.3,448.5 1015.5,458.8 1010.0,463.0" fill="none" stroke="#f3a68f" stroke-width="3.8" stroke-linecap="round" stroke-linejoin="round" />
<path d="M1005.0,588.0 C999.7,593.8 989.7,615.2 973.0,623.0 C956.3,630.8 930.8,634.7 905.0,635.0 C879.2,635.3 847.5,627.5 818.0,625.0 C788.5,622.5 761.3,622.0 728.0,620.0 C694.7,618.0 636.3,614.2 618.0,613.0" fill="none" stroke="#e08c74" stroke-width="5.4" stroke-linecap="round" stroke-linejoin="round"/>
<path d="M1005.0,588.0 C999.7,593.8 989.7,615.2 973.0,623.0 C956.3,630.8 930.8,634.7 905.0,635.0 C879.2,635.3 847.5,627.5 818.0,625.0 C788.5,622.5 761.3,622.0 728.0,620.0 C694.7,618.0 636.3,614.2 618.0,613.0" fill="none" stroke="#f3a68f" stroke-width="3.8" stroke-linecap="round" stroke-linejoin="round" />
<path d="M1150.0,319.0 C1143.2,323.8 1120.7,334.5 1109.0,348.0 C1097.3,361.5 1084.8,391.3 1080.0,400.0" fill="none" stroke="#e08c74" stroke-width="5.4" stroke-linecap="round" stroke-linejoin="round"/>
<path d="M1150.0,319.0 C1143.2,323.8 1120.7,334.5 1109.0,348.0 C1097.3,361.5 1084.8,391.3 1080.0,400.0" fill="none" stroke="#f3a68f" stroke-width="3.8" stroke-linecap="round" stroke-linejoin="round" />
<path d="M1370.0,163.0 C1365.8,171.2 1355.7,196.3 1345.0,212.0 C1334.3,227.7 1318.3,244.3 1306.0,257.0 C1293.7,269.7 1281.3,282.2 1271.0,288.0 C1260.7,293.8 1254.5,290.2 1244.0,292.0 C1233.5,293.8 1223.7,294.5 1208.0,299.0 C1192.3,303.5 1159.7,315.7 1150.0,319.0" fill="none" stroke="#e08c74" stroke-width="5.4" stroke-linecap="round" stroke-linejoin="round"/>
<path d="M1370.0,163.0 C1365.8,171.2 1355.7,196.3 1345.0,212.0 C1334.3,227.7 1318.3,244.3 1306.0,257.0 C1293.7,269.7 1281.3,282.2 1271.0,288.0 C1260.7,293.8 1254.5,290.2 1244.0,292.0 C1233.5,293.8 1223.7,294.5 1208.0,299.0 C1192.3,303.5 1159.7,315.7 1150.0,319.0" fill="none" stroke="#f3a68f" stroke-width="3.8" stroke-linecap="round" stroke-linejoin="round" />
<path d="M1005.0,588.0 C1016.7,588.3 1056.8,589.7 1075.0,590.0 C1093.2,590.3 1097.7,590.3 1114.0,590.0 C1130.3,589.7 1150.2,590.0 1173.0,588.0 C1195.8,586.0 1233.2,582.2 1251.0,578.0 C1268.8,573.8 1263.5,565.2 1280.0,563.0 C1296.5,560.8 1334.5,564.0 1350.0,565.0 C1365.5,566.0 1369.2,568.3 1373.0,569.0" fill="none" stroke="#e08c74" stroke-width="5.4" stroke-linecap="round" stroke-linejoin="round"/>
<path d="M1005.0,588.0 C1016.7,588.3 1056.8,589.7 1075.0,590.0 C1093.2,590.3 1097.7,590.3 1114.0,590.0 C1130.3,589.7 1150.2,590.0 1173.0,588.0 C1195.8,586.0 1233.2,582.2 1251.0,578.0 C1268.8,573.8 1263.5,565.2 1280.0,563.0 C1296.5,560.8 1334.5,564.0 1350.0,565.0 C1365.5,566.0 1369.2,568.3 1373.0,569.0" fill="none" stroke="#f3a68f" stroke-width="3.8" stroke-linecap="round" stroke-linejoin="round" />
<path d="M323.0,230.0 C325.5,228.3 325.2,220.8 338.0,220.0 C350.8,219.2 383.5,222.5 400.0,225.0 C416.5,227.5 422.5,233.3 437.0,235.0 C451.5,236.7 472.3,233.7 487.0,235.0 C501.7,236.3 516.2,240.0 525.0,243.0 C533.8,246.0 537.5,251.3 540.0,253.0" fill="none" stroke="#e08c74" stroke-width="5.4" stroke-linecap="round" stroke-linejoin="round"/>
<path d="M323.0,230.0 C325.5,228.3 325.2,220.8 338.0,220.0 C350.8,219.2 383.5,222.5 400.0,225.0 C416.5,227.5 422.5,233.3 437.0,235.0 C451.5,236.7 472.3,233.7 487.0,235.0 C501.7,236.3 516.2,240.0 525.0,243.0 C533.8,246.0 537.5,251.3 540.0,253.0" fill="none" stroke="#f3a68f" stroke-width="3.8" stroke-linecap="round" stroke-linejoin="round" />
<path d="M855.0,643.0 C857.2,633.8 859.7,601.3 868.0,588.0 C876.3,574.7 892.5,570.5 905.0,563.0 C917.5,555.5 933.3,553.8 943.0,543.0 C952.7,532.2 956.8,518.8 963.0,498.0 C969.2,477.2 970.8,443.8 980.0,418.0 C989.2,392.2 1004.7,362.7 1018.0,343.0 C1031.3,323.3 1053.0,307.2 1060.0,300.0" fill="none" stroke="#9a9a9a" stroke-width="2" stroke-linecap="round" stroke-linejoin="round" />
<path d="M84.0,266.0 C88.7,268.3 103.5,278.0 112.0,280.0 C120.5,282.0 123.7,280.7 135.0,278.0 C146.3,275.3 167.0,266.3 180.0,264.0 C193.0,261.7 198.5,262.8 213.0,264.0 C227.5,265.2 250.8,267.7 267.0,271.0 C283.2,274.3 300.2,280.3 310.0,284.0 C319.8,287.7 318.5,289.5 326.0,293.0 C333.5,296.5 346.0,301.7 355.0,305.0 C364.0,308.3 372.5,308.3 380.0,313.0 C387.5,317.7 393.7,324.7 400.0,333.0 C406.3,341.3 413.5,356.3 418.0,363.0 C422.5,369.7 420.8,366.8 427.0,373.0 C433.2,379.2 444.0,390.0 455.0,400.0 C466.0,410.0 482.8,425.0 493.0,433.0 C503.2,441.0 506.3,442.3 516.0,448.0 C525.7,453.7 537.3,458.3 551.0,467.0 C564.7,475.7 583.7,490.2 598.0,500.0 C612.3,509.8 623.7,516.8 637.0,526.0 C650.3,535.2 664.5,548.5 678.0,555.0 C691.5,561.5 708.0,562.8 718.0,565.0 C728.0,567.2 733.8,563.8 738.0,568.0 C742.2,572.2 743.8,581.7 743.0,590.0 C742.2,598.3 736.3,609.2 733.0,618.0 C729.7,626.8 724.7,638.8 723.0,643.0" fill="none" stroke="#d67f92" stroke-width="6.0" stroke-linecap="round" stroke-linejoin="round"/>
<path d="M84.0,266.0 C88.7,268.3 103.5,278.0 112.0,280.0 C120.5,282.0 123.7,280.7 135.0,278.0 C146.3,275.3 167.0,266.3 180.0,264.0 C193.0,261.7 198.5,262.8 213.0,264.0 C227.5,265.2 250.8,267.7 267.0,271.0 C283.2,274.3 300.2,280.3 310.0,284.0 C319.8,287.7 318.5,289.5 326.0,293.0 C333.5,296.5 346.0,301.7 355.0,305.0 C364.0,308.3 372.5,308.3 380.0,313.0 C387.5,317.7 393.7,324.7 400.0,333.0 C406.3,341.3 413.5,356.3 418.0,363.0 C422.5,369.7 420.8,366.8 427.0,373.0 C433.2,379.2 444.0,390.0 455.0,400.0 C466.0,410.0 482.8,425.0 493.0,433.0 C503.2,441.0 506.3,442.3 516.0,448.0 C525.7,453.7 537.3,458.3 551.0,467.0 C564.7,475.7 583.7,490.2 598.0,500.0 C612.3,509.8 623.7,516.8 637.0,526.0 C650.3,535.2 664.5,548.5 678.0,555.0 C691.5,561.5 708.0,562.8 718.0,565.0 C728.0,567.2 733.8,563.8 738.0,568.0 C742.2,572.2 743.8,581.7 743.0,590.0 C742.2,598.3 736.3,609.2 733.0,618.0 C729.7,626.8 724.7,638.8 723.0,643.0" fill="none" stroke="#e4899c" stroke-width="4.4" stroke-linecap="round" stroke-linejoin="round" />
<path d="M738.0,568.0 C740.5,559.7 746.3,532.2 753.0,518.0 C759.7,503.8 770.5,490.5 778.0,483.0 C785.5,475.5 783.0,473.8 798.0,473.0 C813.0,472.2 852.2,475.5 868.0,478.0 C883.8,480.5 884.7,483.5 893.0,488.0 C901.3,492.5 909.7,499.2 918.0,505.0 C926.3,510.8 937.2,517.5 943.0,523.0 C948.8,528.5 948.0,531.3 953.0,538.0 C958.0,544.7 966.3,555.2 973.0,563.0 C979.7,570.8 985.5,577.5 993.0,585.0 C1000.5,592.5 1013.0,598.3 1018.0,608.0 C1023.0,617.7 1022.2,637.2 1023.0,643.0" fill="none" stroke="#d67f92" stroke-width="6.0" stroke-linecap="round" stroke-linejoin="round"/>
<path d="M738.0,568.0 C740.5,559.7 746.3,532.2 753.0,518.0 C759.7,503.8 770.5,490.5 778.0,483.0 C785.5,475.5 783.0,473.8 798.0,473.0 C813.0,472.2 852.2,475.5 868.0,478.0 C883.8,480.5 884.7,483.5 893.0,488.0 C901.3,492.5 909.7,499.2 918.0,505.0 C926.3,510.8 937.2,517.5 943.0,523.0 C948.8,528.5 948.0,531.3 953.0,538.0 C958.0,544.7 966.3,555.2 973.0,563.0 C979.7,570.8 985.5,577.5 993.0,585.0 C1000.5,592.5 1013.0,598.3 1018.0,608.0 C1023.0,617.7 1022.2,637.2 1023.0,643.0" fill="none" stroke="#e4899c" stroke-width="4.4" stroke-linecap="round" stroke-linejoin="round" />
<path d="M43.0,163.0 C45.0,166.5 50.5,172.8 55.0,184.0 C59.5,195.2 67.5,222.3 70.0,230.0" fill="none" stroke="#d67f92" stroke-width="6.0" stroke-linecap="round" stroke-linejoin="round"/>
<path d="M43.0,163.0 C45.0,166.5 50.5,172.8 55.0,184.0 C59.5,195.2 67.5,222.3 70.0,230.0" fill="none" stroke="#e4899c" stroke-width="4.4" stroke-linecap="round" stroke-linejoin="round" />
<path d="M353.0,163.0 C354.3,167.2 361.5,174.3 361.0,188.0 C360.5,201.7 355.5,229.2 350.0,245.0 C344.5,260.8 333.0,273.3 328.0,283.0 C323.0,292.7 318.3,293.8 320.0,303.0 C321.7,312.2 334.2,328.0 338.0,338.0 C341.8,348.0 341.8,349.3 343.0,363.0 C344.2,376.7 344.7,410.5 345.0,420.0" fill="none" stroke="#d67f92" stroke-width="6.0" stroke-linecap="round" stroke-linejoin="round"/>
<path d="M353.0,163.0 C354.3,167.2 361.5,174.3 361.0,188.0 C360.5,201.7 355.5,229.2 350.0,245.0 C344.5,260.8 333.0,273.3 328.0,283.0 C323.0,292.7 318.3,293.8 320.0,303.0 C321.7,312.2 334.2,328.0 338.0,338.0 C341.8,348.0 341.8,349.3 343.0,363.0 C344.2,376.7 344.7,410.5 345.0,420.0" fill="none" stroke="#e4899c" stroke-width="4.4" stroke-linecap="round" stroke-linejoin="round" />
<path d="M343.0,425.0 C349.2,421.3 368.8,408.5 380.0,403.0 C391.2,397.5 399.5,399.5 410.0,392.0 C420.5,384.5 433.3,370.3 443.0,358.0 C452.7,345.7 461.7,327.2 468.0,318.0 C474.3,308.8 472.7,305.5 481.0,303.0 C489.3,300.5 507.7,304.7 518.0,303.0 C528.3,301.3 533.0,297.8 543.0,293.0 C553.0,288.2 566.3,279.5 578.0,274.0 C589.7,268.5 601.3,262.0 613.0,260.0 C624.7,258.0 638.3,262.8 648.0,262.0 C657.7,261.2 659.3,257.8 671.0,255.0 C682.7,252.2 703.5,246.3 718.0,245.0 C732.5,243.7 741.5,245.7 758.0,247.0 C774.5,248.3 799.0,250.2 817.0,253.0 C835.0,255.8 853.0,258.8 866.0,264.0 C879.0,269.2 886.0,279.5 895.0,284.0 C904.0,288.5 913.5,289.7 920.0,291.0 C926.5,292.3 928.5,290.0 934.0,292.0 C939.5,294.0 945.8,298.5 953.0,303.0 C960.2,307.5 971.2,312.5 977.0,319.0 C982.8,325.5 985.5,335.8 988.0,342.0 C990.5,348.2 986.7,352.3 992.0,356.0 C997.3,359.7 1011.5,362.0 1020.0,364.0 C1028.5,366.0 1035.3,365.2 1043.0,368.0 C1050.7,370.8 1059.8,375.2 1066.0,381.0 C1072.2,386.8 1071.0,393.2 1080.0,403.0 C1089.0,412.8 1108.2,427.7 1120.0,440.0 C1131.8,452.3 1144.5,463.7 1151.0,477.0 C1157.5,490.3 1157.3,504.7 1159.0,520.0 C1160.7,535.3 1161.0,556.0 1161.0,569.0 C1161.0,582.0 1157.0,585.7 1159.0,598.0 C1161.0,610.3 1170.7,635.5 1173.0,643.0" fill="none" stroke="#d67f92" stroke-width="6.0" stroke-linecap="round" stroke-linejoin="round"/>
<path d="M343.0,425.0 C349.2,421.3 368.8,408.5 380.0,403.0 C391.2,397.5 399.5,399.5 410.0,392.0 C420.5,384.5 433.3,370.3 443.0,358.0 C452.7,345.7 461.7,327.2 468.0,318.0 C474.3,308.8 472.7,305.5 481.0,303.0 C489.3,300.5 507.7,304.7 518.0,303.0 C528.3,301.3 533.0,297.8 543.0,293.0 C553.0,288.2 566.3,279.5 578.0,274.0 C589.7,268.5 601.3,262.0 613.0,260.0 C624.7,258.0 638.3,262.8 648.0,262.0 C657.7,261.2 659.3,257.8 671.0,255.0 C682.7,252.2 703.5,246.3 718.0,245.0 C732.5,243.7 741.5,245.7 758.0,247.0 C774.5,248.3 799.0,250.2 817.0,253.0 C835.0,255.8 853.0,258.8 866.0,264.0 C879.0,269.2 886.0,279.5 895.0,284.0 C904.0,288.5 913.5,289.7 920.0,291.0 C926.5,292.3 928.5,290.0 934.0,292.0 C939.5,294.0 945.8,298.5 953.0,303.0 C960.2,307.5 971.2,312.5 977.0,319.0 C982.8,325.5 985.5,335.8 988.0,342.0 C990.5,348.2 986.7,352.3 992.0,356.0 C997.3,359.7 1011.5,362.0 1020.0,364.0 C1028.5,366.0 1035.3,365.2 1043.0,368.0 C1050.7,370.8 1059.8,375.2 1066.0,381.0 C1072.2,386.8 1071.0,393.2 1080.0,403.0 C1089.0,412.8 1108.2,427.7 1120.0,440.0 C1131.8,452.3 1144.5,463.7 1151.0,477.0 C1157.5,490.3 1157.3,504.7 1159.0,520.0 C1160.7,535.3 1161.0,556.0 1161.0,569.0 C1161.0,582.0 1157.0,585.7 1159.0,598.0 C1161.0,610.3 1170.7,635.5 1173.0,643.0" fill="none" stroke="#e4899c" stroke-width="4.4" stroke-linecap="round" stroke-linejoin="round" />
<path d="M290.0,463.0 C288.2,469.2 280.5,487.3 279.0,500.0 C277.5,512.7 279.0,522.7 281.0,539.0 C283.0,555.3 288.2,580.7 291.0,598.0 C293.8,615.3 296.8,635.5 298.0,643.0" fill="none" stroke="#d67f92" stroke-width="6.0" stroke-linecap="round" stroke-linejoin="round"/>
<path d="M290.0,463.0 C288.2,469.2 280.5,487.3 279.0,500.0 C277.5,512.7 279.0,522.7 281.0,539.0 C283.0,555.3 288.2,580.7 291.0,598.0 C293.8,615.3 296.8,635.5 298.0,643.0" fill="none" stroke="#e4899c" stroke-width="4.4" stroke-linecap="round" stroke-linejoin="round" />
<path d="M343.0,425.0 C339.2,427.5 327.2,435.0 320.0,440.0 C312.8,445.0 305.0,451.2 300.0,455.0 C295.0,458.8 291.7,461.7 290.0,463.0" fill="none" stroke="#d67f92" stroke-width="6.0" stroke-linecap="round" stroke-linejoin="round"/>
<path d="M343.0,425.0 C339.2,427.5 327.2,435.0 320.0,440.0 C312.8,445.0 305.0,451.2 300.0,455.0 C295.0,458.8 291.7,461.7 290.0,463.0" fill="none" stroke="#e4899c" stroke-width="4.4" stroke-linecap="round" stroke-linejoin="round" />
<path d="M637.0,526.0 C637.2,531.5 638.3,547.0 638.0,559.0 C637.7,571.0 636.5,584.0 635.0,598.0 C633.5,612.0 630.0,635.5 629.0,643.0" fill="none" stroke="#d67f92" stroke-width="6.0" stroke-linecap="round" stroke-linejoin="round"/>
<path d="M637.0,526.0 C637.2,531.5 638.3,547.0 638.0,559.0 C637.7,571.0 636.5,584.0 635.0,598.0 C633.5,612.0 630.0,635.5 629.0,643.0" fill="none" stroke="#e4899c" stroke-width="4.4" stroke-linecap="round" stroke-linejoin="round" />
<path d="M1320.0,643.0 C1325.0,638.0 1340.8,625.3 1350.0,613.0 C1359.2,600.7 1364.0,581.7 1375.0,569.0 C1386.0,556.3 1397.5,547.5 1416.0,537.0 C1434.5,526.5 1462.0,516.2 1486.0,506.0 C1510.0,495.8 1538.8,480.3 1560.0,476.0 C1581.2,471.7 1597.3,480.2 1613.0,480.0 C1628.7,479.8 1642.7,473.5 1654.0,475.0 C1665.3,476.5 1671.8,483.5 1681.0,489.0 C1690.2,494.5 1699.2,502.8 1709.0,508.0 C1718.8,513.2 1724.8,515.3 1740.0,520.0 C1755.2,524.7 1777.0,529.2 1800.0,536.0 C1823.0,542.8 1858.5,553.7 1878.0,561.0 C1897.5,568.3 1904.0,575.8 1917.0,580.0 C1930.0,584.2 1939.8,582.7 1956.0,586.0 C1972.2,589.3 1994.5,595.7 2014.0,600.0 C2033.5,604.3 2053.5,609.2 2073.0,612.0 C2092.5,614.8 2111.5,611.8 2131.0,617.0 C2150.5,622.2 2180.2,638.7 2190.0,643.0" fill="none" stroke="#d67f92" stroke-width="6.0" stroke-linecap="round" stroke-linejoin="round"/>
<path d="M1320.0,643.0 C1325.0,638.0 1340.8,625.3 1350.0,613.0 C1359.2,600.7 1364.0,581.7 1375.0,569.0 C1386.0,556.3 1397.5,547.5 1416.0,537.0 C1434.5,526.5 1462.0,516.2 1486.0,506.0 C1510.0,495.8 1538.8,480.3 1560.0,476.0 C1581.2,471.7 1597.3,480.2 1613.0,480.0 C1628.7,479.8 1642.7,473.5 1654.0,475.0 C1665.3,476.5 1671.8,483.5 1681.0,489.0 C1690.2,494.5 1699.2,502.8 1709.0,508.0 C1718.8,513.2 1724.8,515.3 1740.0,520.0 C1755.2,524.7 1777.0,529.2 1800.0,536.0 C1823.0,542.8 1858.5,553.7 1878.0,561.0 C1897.5,568.3 1904.0,575.8 1917.0,580.0 C1930.0,584.2 1939.8,582.7 1956.0,586.0 C1972.2,589.3 1994.5,595.7 2014.0,600.0 C2033.5,604.3 2053.5,609.2 2073.0,612.0 C2092.5,614.8 2111.5,611.8 2131.0,617.0 C2150.5,622.2 2180.2,638.7 2190.0,643.0" fill="none" stroke="#e4899c" stroke-width="4.4" stroke-linecap="round" stroke-linejoin="round" />
<path d="M1654.0,475.0 C1664.3,464.3 1701.7,423.0 1716.0,411.0 C1730.3,399.0 1715.7,415.5 1740.0,403.0 C1764.3,390.5 1834.7,350.3 1862.0,336.0 C1889.3,321.7 1892.5,324.7 1904.0,317.0 C1915.5,309.3 1918.3,302.3 1931.0,290.0 C1943.7,277.7 1960.2,257.7 1980.0,243.0 C1999.8,228.3 2029.0,209.5 2050.0,202.0 C2071.0,194.5 2087.0,197.8 2106.0,198.0 C2125.0,198.2 2147.8,204.0 2164.0,203.0 C2180.2,202.0 2190.7,196.8 2203.0,192.0 C2215.3,187.2 2227.5,178.8 2238.0,174.0 C2248.5,169.2 2261.3,164.8 2266.0,163.0" fill="none" stroke="#d67f92" stroke-width="6.0" stroke-linecap="round" stroke-linejoin="round"/>
<path d="M1654.0,475.0 C1664.3,464.3 1701.7,423.0 1716.0,411.0 C1730.3,399.0 1715.7,415.5 1740.0,403.0 C1764.3,390.5 1834.7,350.3 1862.0,336.0 C1889.3,321.7 1892.5,324.7 1904.0,317.0 C1915.5,309.3 1918.3,302.3 1931.0,290.0 C1943.7,277.7 1960.2,257.7 1980.0,243.0 C1999.8,228.3 2029.0,209.5 2050.0,202.0 C2071.0,194.5 2087.0,197.8 2106.0,198.0 C2125.0,198.2 2147.8,204.0 2164.0,203.0 C2180.2,202.0 2190.7,196.8 2203.0,192.0 C2215.3,187.2 2227.5,178.8 2238.0,174.0 C2248.5,169.2 2261.3,164.8 2266.0,163.0" fill="none" stroke="#e4899c" stroke-width="4.4" stroke-linecap="round" stroke-linejoin="round" />
<path d="M2384.0,575.0 C2380.3,582.0 2367.8,605.8 2362.0,617.0 C2356.2,628.2 2351.2,637.8 2349.0,642.0" fill="none" stroke="#d67f92" stroke-width="6.0" stroke-linecap="round" stroke-linejoin="round"/>
<path d="M2384.0,575.0 C2380.3,582.0 2367.8,605.8 2362.0,617.0 C2356.2,628.2 2351.2,637.8 2349.0,642.0" fill="none" stroke="#e4899c" stroke-width="4.4" stroke-linecap="round" stroke-linejoin="round" />
<path d="M500.0,300.0 C512.5,298.7 561.7,275.3 575.0,292.0 C588.3,308.7 585.8,377.8 580.0,400.0 C574.2,422.2 553.3,425.0 540.0,425.0 C526.7,425.0 506.7,420.8 500.0,400.0 C493.3,379.2 500.0,316.7 500.0,300.0 Z" fill="#d9e9cc" fill-opacity="0.8"/>
<path d="M520.0,330.0 C526.7,325.0 546.7,302.5 560.0,300.0 C573.3,297.5 595.0,303.3 600.0,315.0 C605.0,326.7 600.0,357.5 590.0,370.0 C580.0,382.5 552.5,390.0 540.0,390.0 C527.5,390.0 518.3,380.0 515.0,370.0 C511.7,360.0 519.2,336.7 520.0,330.0 Z" fill="#e6e3e8" fill-opacity="0.5"/>
<path d="M530.0,380.0 L585.0,305.0" fill="none" stroke="#cfc8da" stroke-width="2.5" stroke-linecap="round" stroke-linejoin="round" />
<path d="M545.0,385.0 L598.0,318.0" fill="none" stroke="#cfc8da" stroke-width="2.5" stroke-linecap="round" stroke-linejoin="round" />
<text x="527" y="357" font-family="Liberation Sans" font-size="22" fill="#8a63c9">&#9992;</text>
<rect x="748" y="359" width="61" height="26" rx="3" fill="#f3dccf" stroke="#d9ab9a" stroke-width="1.5"/>
<text x="756" y="378" font-family="Liberation Sans" font-size="16" fill="#6e3b2d">NC 50</text>
<rect x="1277" y="183" width="111" height="27" rx="3" fill="#f2e5d2" stroke="#dcc49f" stroke-width="1.5"/>
<text x="1313" y="203" font-family="Liberation Sans" font-size="16" fill="#6b5635">401 BUS</text>
<rect x="1172" y="275" width="72" height="27" rx="3" fill="#f1dcd6" stroke="#d8aaa0" stroke-width="1.5"/>
<text x="1196" y="296" font-family="Liberation Sans" font-size="16" fill="#6e3b2d">401</text>
<text x="830" y="647" font-family="Liberation Sans" font-size="26" fill="#3a3a3a" stroke="#fff" stroke-width="3" paint-order="stroke">Raleigh</text>
<text x="385" y="514" font-family="Liberation Sans" font-size="17" fill="#555" stroke="#fff" stroke-width="3" paint-order="stroke">Morrisville</text>
<text x="1193" y="620" font-family="Liberation Sans" font-size="17" fill="#555" stroke="#fff" stroke-width="3" paint-order="stroke">Knightdale</text>
<text x="577" y="400" font-family="Liberation Sans" font-style="italic" font-size="16" fill="#5a9e50">William</text>
<text x="563" y="419" font-family="Liberation Sans" font-style="italic" font-size="16" fill="#5a9e50">B. Umstead</text>
<text x="580" y="438" font-family="Liberation Sans" font-style="italic" font-size="16" fill="#5a9e50">State Park</text>
<text x="122" y="284" font-family="Liberation Sans" font-style="italic" font-size="15" fill="#a0313f" stroke="#fff" stroke-opacity="0.6" stroke-width="2" paint-order="stroke">274</text>
<text x="178" y="272" font-family="Liberation Sans" font-style="italic" font-size="15" fill="#a0313f" stroke="#fff" stroke-opacity="0.6" stroke-width="2" paint-order="stroke">276</text>
<text x="262" y="279" font-family="Liberation Sans" font-style="italic" font-size="15" fill="#a0313f" stroke="#fff" stroke-opacity="0.6" stroke-width="2" paint-order="stroke">278</text>
<text x="320" y="257" font-family="Liberation Sans" font-style="italic" font-size="15" fill="#a0313f" stroke="#fff" stroke-opacity="0.6" stroke-width="2" paint-order="stroke">5B</text>
<text x="317" y="294" font-family="Liberation Sans" font-style="italic" font-size="15" fill="#a0313f" stroke="#fff" stroke-opacity="0.6" stroke-width="2" paint-order="stroke">5A</text>
<text x="380" y="326" font-family="Liberation Sans" font-style="italic" font-size="15" fill="#a0313f" stroke="#fff" stroke-opacity="0.6" stroke-width="2" paint-order="stroke">281</text>
<text x="355" y="208" font-family="Liberation Sans" font-style="italic" font-size="15" fill="#a0313f" stroke="#fff" stroke-opacity="0.6" stroke-width="2" paint-order="stroke">8</text>
<text x="350" y="233" font-family="Liberation Sans" font-style="italic" font-size="15" fill="#a0313f" stroke="#fff" stroke-opacity="0.6" stroke-width="2" paint-order="stroke">7</text>
<text x="345" y="258" font-family="Liberation Sans" font-style="italic" font-size="15" fill="#a0313f" stroke="#fff" stroke-opacity="0.6" stroke-width="2" paint-order="stroke">6</text>
<text x="433" y="393" font-family="Liberation Sans" font-style="italic" font-size="15" fill="#a0313f" stroke="#fff" stroke-opacity="0.6" stroke-width="2" paint-order="stroke">284</text>
<text x="487" y="444" font-family="Liberation Sans" font-style="italic" font-size="15" fill="#a0313f" stroke="#fff" stroke-opacity="0.6" stroke-width="2" paint-order="stroke">285B</text>
<text x="575" y="483" font-family="Liberation Sans" font-style="italic" font-size="15" fill="#a0313f" stroke="#fff" stroke-opacity="0.6" stroke-width="2" paint-order="stroke">287</text>
<text x="625" y="508" font-family="Liberation Sans" font-style="italic" font-size="15" fill="#a0313f" stroke="#fff" stroke-opacity="0.6" stroke-width="2" paint-order="stroke">289</text>
<text x="738" y="547" font-family="Liberation Sans" font-style="italic" font-size="15" fill="#a0313f" stroke="#fff" stroke-opacity="0.6" stroke-width="2" paint-order="stroke">6</text>
<text x="787" y="477" font-family="Liberation Sans" font-style="italic" font-size="15" fill="#a0313f" stroke="#fff" stroke-opacity="0.6" stroke-width="2" paint-order="stroke">7B</text>
<text x="860" y="483" font-family="Liberation Sans" font-style="italic" font-size="15" fill="#a0313f" stroke="#fff" stroke-opacity="0.6" stroke-width="2" paint-order="stroke">8A</text>
<text x="905" y="514" font-family="Liberation Sans" font-style="italic" font-size="15" fill="#a0313f" stroke="#fff" stroke-opacity="0.6" stroke-width="2" paint-order="stroke">10</text>
<text x="937" y="541" font-family="Liberation Sans" font-style="italic" font-size="15" fill="#a0313f" stroke="#fff" stroke-opacity="0.6" stroke-width="2" paint-order="stroke">11A</text>
<text x="970" y="576" font-family="Liberation Sans" font-style="italic" font-size="15" fill="#a0313f" stroke="#fff" stroke-opacity="0.6" stroke-width="2" paint-order="stroke">12</text>
<text x="980" y="592" font-family="Liberation Sans" font-style="italic" font-size="15" fill="#a0313f" stroke="#fff" stroke-opacity="0.6" stroke-width="2" paint-order="stroke">13A</text>
<text x="1015" y="621" font-family="Liberation Sans" font-style="italic" font-size="15" fill="#a0313f" stroke="#fff" stroke-opacity="0.6" stroke-width="2" paint-order="stroke">14</text>
<text x="1148" y="585" font-family="Liberation Sans" font-style="italic" font-size="15" fill="#a0313f" stroke="#fff" stroke-opacity="0.6" stroke-width="2" paint-order="stroke">24A</text>
<text x="1150" y="611" font-family="Liberation Sans" font-style="italic" font-size="15" fill="#a0313f" stroke="#fff" stroke-opacity="0.6" stroke-width="2" paint-order="stroke">24</text>
<text x="990" y="362" font-family="Liberation Sans" font-style="italic" font-size="15" fill="#a0313f" stroke="#fff" stroke-opacity="0.6" stroke-width="2" paint-order="stroke">16</text>
<text x="1020" y="372" font-family="Liberation Sans" font-style="italic" font-size="15" fill="#a0313f" stroke="#fff" stroke-opacity="0.6" stroke-width="2" paint-order="stroke">17</text>
<text x="1040" y="375" font-family="Liberation Sans" font-style="italic" font-size="15" fill="#a0313f" stroke="#fff" stroke-opacity="0.6" stroke-width="2" paint-order="stroke">17</text>
<text x="1080" y="397" font-family="Liberation Sans" font-style="italic" font-size="15" fill="#a0313f" stroke="#fff" stroke-opacity="0.6" stroke-width="2" paint-order="stroke">18</text>
<text x="930" y="300" font-family="Liberation Sans" font-style="italic" font-size="15" fill="#a0313f" stroke="#fff" stroke-opacity="0.6" stroke-width="2" paint-order="stroke">14</text>
<text x="770" y="253" font-family="Liberation Sans" font-style="italic" font-size="15" fill="#a0313f" stroke="#fff" stroke-opacity="0.6" stroke-width="2" paint-order="stroke">9</text>
<text x="795" y="255" font-family="Liberation Sans" font-style="italic" font-size="15" fill="#a0313f" stroke="#fff" stroke-opacity="0.6" stroke-width="2" paint-order="stroke">9</text>
<text x="641" y="268" font-family="Liberation Sans" font-style="italic" font-size="15" fill="#a0313f" stroke="#fff" stroke-opacity="0.6" stroke-width="2" paint-order="stroke">7</text>
<text x="570" y="302" font-family="Liberation Sans" font-style="italic" font-size="15" fill="#a0313f" stroke="#fff" stroke-opacity="0.6" stroke-width="2" paint-order="stroke">293</text>
<text x="520" y="303" font-family="Liberation Sans" font-style="italic" font-size="15" fill="#a0313f" stroke="#fff" stroke-opacity="0.6" stroke-width="2" paint-order="stroke">3</text>
<text x="1625" y="515" font-family="Liberation Sans" font-style="italic" font-size="15" fill="#a0313f" stroke="#fff" stroke-opacity="0.6" stroke-width="2" paint-order="stroke">432</text>
<text x="1580" y="480" font-family="Liberation Sans" font-style="italic" font-size="15" fill="#a0313f" stroke="#fff" stroke-opacity="0.6" stroke-width="2" paint-order="stroke">435</text>
<text x="1640" y="484" font-family="Liberation Sans" font-style="italic" font-size="15" fill="#a0313f" stroke="#fff" stroke-opacity="0.6" stroke-width="2" paint-order="stroke">436</text>
<text x="1668" y="490" font-family="Liberation Sans" font-style="italic" font-size="15" fill="#a0313f" stroke="#fff" stroke-opacity="0.6" stroke-width="2" paint-order="stroke">20</text>
<text x="1693" y="500" font-family="Liberation Sans" font-style="italic" font-size="15" fill="#a0313f" stroke="#fff" stroke-opacity="0.6" stroke-width="2" paint-order="stroke">20</text>
<text x="1705" y="522" font-family="Liberation Sans" font-style="italic" font-size="15" fill="#a0313f" stroke="#fff" stroke-opacity="0.6" stroke-width="2" paint-order="stroke">21</text>
<text x="1720" y="410" font-family="Liberation Sans" font-style="italic" font-size="15" fill="#a0313f" stroke="#fff" stroke-opacity="0.6" stroke-width="2" paint-order="stroke">439</text>
<text x="1835" y="355" font-family="Liberation Sans" font-style="italic" font-size="15" fill="#a0313f" stroke="#fff" stroke-opacity="0.6" stroke-width="2" paint-order="stroke">442</text>
<text x="1815" y="366" font-family="Liberation Sans" font-style="italic" font-size="15" fill="#a0313f" stroke="#fff" stroke-opacity="0.6" stroke-width="2" paint-order="stroke">442</text>
<text x="1955" y="255" font-family="Liberation Sans" font-style="italic" font-size="15" fill="#a0313f" stroke="#fff" stroke-opacity="0.6" stroke-width="2" paint-order="stroke">446</text>
<text x="2110" y="204" font-family="Liberation Sans" font-style="italic" font-size="15" fill="#a0313f" stroke="#fff" stroke-opacity="0.6" stroke-width="2" paint-order="stroke">450</text>
<text x="2198" y="188" font-family="Liberation Sans" font-style="italic" font-size="15" fill="#a0313f" stroke="#fff" stroke-opacity="0.6" stroke-width="2" paint-order="stroke">453</text>
<text x="1900" y="582" font-family="Liberation Sans" font-style="italic" font-size="15" fill="#a0313f" stroke="#fff" stroke-opacity="0.6" stroke-width="2" paint-order="stroke">27</text>
<text x="2070" y="618" font-family="Liberation Sans" font-style="italic" font-size="15" fill="#a0313f" stroke="#fff" stroke-opacity="0.6" stroke-width="2" paint-order="stroke">30</text>
<text x="2100" y="618" font-family="Liberation Sans" font-style="italic" font-size="15" fill="#a0313f" stroke="#fff" stroke-opacity="0.6" stroke-width="2" paint-order="stroke">30</text>
<text x="287" y="612" font-family="Liberation Sans" font-style="italic" font-size="15" fill="#a0313f" stroke="#fff" stroke-opacity="0.6" stroke-width="2" paint-order="stroke">62</text>
<text x="270" y="546" font-family="Liberation Sans" font-style="italic" font-size="15" fill="#a0313f" stroke="#fff" stroke-opacity="0.6" stroke-width="2" paint-order="stroke">64</text>
<text x="275" y="572" font-family="Liberation Sans" font-style="italic" font-size="15" fill="#a0313f" stroke="#fff" stroke-opacity="0.6" stroke-width="2" paint-order="stroke">64</text>
<text x="300" y="450" font-family="Liberation Sans" font-style="italic" font-size="15" fill="#a0313f" stroke="#fff" stroke-opacity="0.6" stroke-width="2" paint-order="stroke">66A</text>
<text x="360" y="440" font-family="Liberation Sans" font-style="italic" font-size="15" fill="#a0313f" stroke="#fff" stroke-opacity="0.6" stroke-width="2" paint-order="stroke">67</text>
<text x="400" y="400" font-family="Liberation Sans" font-style="italic" font-size="15" fill="#a0313f" stroke="#fff" stroke-opacity="0.6" stroke-width="2" paint-order="stroke">69</text>
<text x="440" y="341" font-family="Liberation Sans" font-style="italic" font-size="15" fill="#a0313f" stroke="#fff" stroke-opacity="0.6" stroke-width="2" paint-order="stroke">1B-A</text>
<text x="435" y="366" font-family="Liberation Sans" font-style="italic" font-size="15" fill="#a0313f" stroke="#fff" stroke-opacity="0.6" stroke-width="2" paint-order="stroke">1B</text>
<g filter="url(#shb)">
<path d="M282.0,394.0 l31.3,-15.2 a12,12 0 1 0 -16.1,-16.1 Z" fill="url(#sg)"/>
<path d="M405.0,397.0 l31.3,-15.2 a12,12 0 1 0 -16.1,-16.1 Z" fill="url(#sg)"/>
<path d="M463.0,317.7 l31.3,-15.2 a12,12 0 1 0 -16.1,-16.1 Z" fill="url(#sg)"/>
<path d="M482.0,306.4 l31.3,-15.2 a12,12 0 1 0 -16.1,-16.1 Z" fill="url(#sg)"/>
<path d="M474.5,312.2 l31.3,-15.2 a12,12 0 1 0 -16.1,-16.1 Z" fill="url(#sg)"/>
<path d="M487.0,385.8 l31.3,-15.2 a12,12 0 1 0 -16.1,-16.1 Z" fill="url(#sg)"/>
<path d="M506.0,414.5 l31.3,-15.2 a12,12 0 1 0 -16.1,-16.1 Z" fill="url(#sg)"/>
<path d="M499.5,438.0 l31.3,-15.2 a12,12 0 1 0 -16.1,-16.1 Z" fill="url(#sg)"/>
<path d="M274.2,453.8 l31.3,-15.2 a12,12 0 1 0 -16.1,-16.1 Z" fill="url(#sg)"/>
<path d="M310.8,452.8 l31.3,-15.2 a12,12 0 1 0 -16.1,-16.1 Z" fill="url(#sg)"/>
<path d="M349.2,431.4 l31.3,-15.2 a12,12 0 1 0 -16.1,-16.1 Z" fill="url(#sg)"/>
<path d="M316.0,493.4 l31.3,-15.2 a12,12 0 1 0 -16.1,-16.1 Z" fill="url(#sg)"/>
<path d="M321.0,499.2 l31.3,-15.2 a12,12 0 1 0 -16.1,-16.1 Z" fill="url(#sg)"/>
<path d="M325.2,507.4 l31.3,-15.2 a12,12 0 1 0 -16.1,-16.1 Z" fill="url(#sg)"/>
<path d="M373.1,487.0 l31.3,-15.2 a12,12 0 1 0 -16.1,-16.1 Z" fill="url(#sg)"/>
<path d="M387.6,520.6 l31.3,-15.2 a12,12 0 1 0 -16.1,-16.1 Z" fill="url(#sg)"/>
<path d="M256.1,619.4 l31.3,-15.2 a12,12 0 1 0 -16.1,-16.1 Z" fill="url(#sg)"/>
<path d="M326.8,655.8 l31.3,-15.2 a12,12 0 1 0 -16.1,-16.1 Z" fill="url(#sg)"/>
<path d="M443.5,617.4 l31.3,-15.2 a12,12 0 1 0 -16.1,-16.1 Z" fill="url(#sg)"/>
<path d="M493.0,213.5 l31.3,-15.2 a12,12 0 1 0 -16.1,-16.1 Z" fill="url(#sg)"/>
<path d="M598.7,234.5 l31.3,-15.2 a12,12 0 1 0 -16.1,-16.1 Z" fill="url(#sg)"/>
<path d="M546.7,260.3 l31.3,-15.2 a12,12 0 1 0 -16.1,-16.1 Z" fill="url(#sg)"/>
<path d="M550.8,262.0 l31.3,-15.2 a12,12 0 1 0 -16.1,-16.1 Z" fill="url(#sg)"/>
<path d="M579.2,270.3 l31.3,-15.2 a12,12 0 1 0 -16.1,-16.1 Z" fill="url(#sg)"/>
<path d="M565.0,275.0 l31.3,-15.2 a12,12 0 1 0 -16.1,-16.1 Z" fill="url(#sg)"/>
<path d="M582.5,291.7 l31.3,-15.2 a12,12 0 1 0 -16.1,-16.1 Z" fill="url(#sg)"/>
<path d="M659.2,235.7 l31.3,-15.2 a12,12 0 1 0 -16.1,-16.1 Z" fill="url(#sg)"/>
<path d="M667.5,220.3 l31.3,-15.2 a12,12 0 1 0 -16.1,-16.1 Z" fill="url(#sg)"/>
<path d="M723.3,187.8 l31.3,-15.2 a12,12 0 1 0 -16.1,-16.1 Z" fill="url(#sg)"/>
<path d="M680.0,254.5 l31.3,-15.2 a12,12 0 1 0 -16.1,-16.1 Z" fill="url(#sg)"/>
<path d="M705.8,250.0 l31.3,-15.2 a12,12 0 1 0 -16.1,-16.1 Z" fill="url(#sg)"/>
<path d="M739.2,244.5 l31.3,-15.2 a12,12 0 1 0 -16.1,-16.1 Z" fill="url(#sg)"/>
<path d="M751.7,212.0 l31.3,-15.2 a12,12 0 1 0 -16.1,-16.1 Z" fill="url(#sg)"/>
<path d="M771.7,222.8 l31.3,-15.2 a12,12 0 1 0 -16.1,-16.1 Z" fill="url(#sg)"/>
<path d="M774.2,251.7 l31.3,-15.2 a12,12 0 1 0 -16.1,-16.1 Z" fill="url(#sg)"/>
<path d="M791.7,250.0 l31.3,-15.2 a12,12 0 1 0 -16.1,-16.1 Z" fill="url(#sg)"/>
<path d="M806.3,251.7 l31.3,-15.2 a12,12 0 1 0 -16.1,-16.1 Z" fill="url(#sg)"/>
<path d="M849.2,224.5 l31.3,-15.2 a12,12 0 1 0 -16.1,-16.1 Z" fill="url(#sg)"/>
<path d="M842.0,212.0 l31.3,-15.2 a12,12 0 1 0 -16.1,-16.1 Z" fill="url(#sg)"/>
<path d="M842.5,261.2 l31.3,-15.2 a12,12 0 1 0 -16.1,-16.1 Z" fill="url(#sg)"/>
<path d="M853.3,261.2 l31.3,-15.2 a12,12 0 1 0 -16.1,-16.1 Z" fill="url(#sg)"/>
<path d="M863.3,263.7 l31.3,-15.2 a12,12 0 1 0 -16.1,-16.1 Z" fill="url(#sg)"/>
<path d="M878.3,275.3 l31.3,-15.2 a12,12 0 1 0 -16.1,-16.1 Z" fill="url(#sg)"/>
<path d="M902.5,246.7 l31.3,-15.2 a12,12 0 1 0 -16.1,-16.1 Z" fill="url(#sg)"/>
<path d="M631.0,348.8 l31.3,-15.2 a12,12 0 1 0 -16.1,-16.1 Z" fill="url(#sg)"/>
<path d="M920.1,291.2 l31.3,-15.2 a12,12 0 1 0 -16.1,-16.1 Z" fill="url(#sg)"/>
<path d="M977.6,243.6 l31.3,-15.2 a12,12 0 1 0 -16.1,-16.1 Z" fill="url(#sg)"/>
<path d="M1012.7,179.7 l31.3,-15.2 a12,12 0 1 0 -16.1,-16.1 Z" fill="url(#sg)"/>
<path d="M1096.0,203.5 l31.3,-15.2 a12,12 0 1 0 -16.1,-16.1 Z" fill="url(#sg)"/>
<path d="M1131.1,261.3 l31.3,-15.2 a12,12 0 1 0 -16.1,-16.1 Z" fill="url(#sg)"/>
<path d="M1020.5,361.9 l31.3,-15.2 a12,12 0 1 0 -16.1,-16.1 Z" fill="url(#sg)"/>
<path d="M1031.0,355.0 l31.3,-15.2 a12,12 0 1 0 -16.1,-16.1 Z" fill="url(#sg)"/>
<path d="M1123.1,344.3 l31.3,-15.2 a12,12 0 1 0 -16.1,-16.1 Z" fill="url(#sg)"/>
<path d="M1142.5,325.3 l31.3,-15.2 a12,12 0 1 0 -16.1,-16.1 Z" fill="url(#sg)"/>
<path d="M1135.5,313.2 l31.3,-15.2 a12,12 0 1 0 -16.1,-16.1 Z" fill="url(#sg)"/>
<path d="M1134.0,320.5 l31.3,-15.2 a12,12 0 1 0 -16.1,-16.1 Z" fill="url(#sg)"/>
<path d="M1184.0,273.9 l31.3,-15.2 a12,12 0 1 0 -16.1,-16.1 Z" fill="url(#sg)"/>
<path d="M1202.7,293.5 l31.3,-15.2 a12,12 0 1 0 -16.1,-16.1 Z" fill="url(#sg)"/>
<path d="M1211.2,294.7 l31.3,-15.2 a12,12 0 1 0 -16.1,-16.1 Z" fill="url(#sg)"/>
<path d="M1184.0,301.2 l31.3,-15.2 a12,12 0 1 0 -16.1,-16.1 Z" fill="url(#sg)"/>
<path d="M1192.2,352.4 l31.3,-15.2 a12,12 0 1 0 -16.1,-16.1 Z" fill="url(#sg)"/>
<path d="M1262.3,246.4 l31.3,-15.2 a12,12 0 1 0 -16.1,-16.1 Z" fill="url(#sg)"/>
<path d="M1295.7,223.0 l31.3,-15.2 a12,12 0 1 0 -16.1,-16.1 Z" fill="url(#sg)"/>
<path d="M1267.0,350.9 l31.3,-15.2 a12,12 0 1 0 -16.1,-16.1 Z" fill="url(#sg)"/>
<path d="M1355.0,317.0 l31.3,-15.2 a12,12 0 1 0 -16.1,-16.1 Z" fill="url(#sg)"/>
<path d="M1422.3,205.0 l31.3,-15.2 a12,12 0 1 0 -16.1,-16.1 Z" fill="url(#sg)"/>
<path d="M1441.3,264.5 l31.3,-15.2 a12,12 0 1 0 -16.1,-16.1 Z" fill="url(#sg)"/>
<path d="M1450.0,255.7 l31.3,-15.2 a12,12 0 1 0 -16.1,-16.1 Z" fill="url(#sg)"/>
<path d="M1538.7,282.0 l31.3,-15.2 a12,12 0 1 0 -16.1,-16.1 Z" fill="url(#sg)"/>
<path d="M1476.3,340.5 l31.3,-15.2 a12,12 0 1 0 -16.1,-16.1 Z" fill="url(#sg)"/>
<path d="M1511.4,350.8 l31.3,-15.2 a12,12 0 1 0 -16.1,-16.1 Z" fill="url(#sg)"/>
<path d="M1481.2,366.7 l31.3,-15.2 a12,12 0 1 0 -16.1,-16.1 Z" fill="url(#sg)"/>
<path d="M1551.6,387.4 l31.3,-15.2 a12,12 0 1 0 -16.1,-16.1 Z" fill="url(#sg)"/>
<path d="M1543.6,377.6 l31.3,-15.2 a12,12 0 1 0 -16.1,-16.1 Z" fill="url(#sg)"/>
<path d="M1636.4,361.9 l31.3,-15.2 a12,12 0 1 0 -16.1,-16.1 Z" fill="url(#sg)"/>
<path d="M1700.4,376.7 l31.3,-15.2 a12,12 0 1 0 -16.1,-16.1 Z" fill="url(#sg)"/>
<path d="M1676.6,408.8 l31.3,-15.2 a12,12 0 1 0 -16.1,-16.1 Z" fill="url(#sg)"/>
<path d="M1677.9,427.2 l31.3,-15.2 a12,12 0 1 0 -16.1,-16.1 Z" fill="url(#sg)"/>
<path d="M1666.8,462.4 l31.3,-15.2 a12,12 0 1 0 -16.1,-16.1 Z" fill="url(#sg)"/>
<path d="M1677.5,456.5 l31.3,-15.2 a12,12 0 1 0 -16.1,-16.1 Z" fill="url(#sg)"/>
<path d="M1703.4,487.9 l31.3,-15.2 a12,12 0 1 0 -16.1,-16.1 Z" fill="url(#sg)"/>
<path d="M1719.5,515.0 l31.3,-15.2 a12,12 0 1 0 -16.1,-16.1 Z" fill="url(#sg)"/>
<path d="M1693.9,565.8 l31.3,-15.2 a12,12 0 1 0 -16.1,-16.1 Z" fill="url(#sg)"/>
<path d="M1095.8,414.6 l31.3,-15.2 a12,12 0 1 0 -16.1,-16.1 Z" fill="url(#sg)"/>
<path d="M1117.2,441.9 l31.3,-15.2 a12,12 0 1 0 -16.1,-16.1 Z" fill="url(#sg)"/>
<path d="M1165.0,396.5 l31.3,-15.2 a12,12 0 1 0 -16.1,-16.1 Z" fill="url(#sg)"/>
<path d="M1166.0,402.0 l31.3,-15.2 a12,12 0 1 0 -16.1,-16.1 Z" fill="url(#sg)"/>
<path d="M1167.9,408.2 l31.3,-15.2 a12,12 0 1 0 -16.1,-16.1 Z" fill="url(#sg)"/>
<path d="M1226.9,413.0 l31.3,-15.2 a12,12 0 1 0 -16.1,-16.1 Z" fill="url(#sg)"/>
<path d="M1153.0,448.7 l31.3,-15.2 a12,12 0 1 0 -16.1,-16.1 Z" fill="url(#sg)"/>
<path d="M1174.7,443.8 l31.3,-15.2 a12,12 0 1 0 -16.1,-16.1 Z" fill="url(#sg)"/>
<path d="M1163.0,451.6 l31.3,-15.2 a12,12 0 1 0 -16.1,-16.1 Z" fill="url(#sg)"/>
<path d="M1147.4,474.0 l31.3,-15.2 a12,12 0 1 0 -16.1,-16.1 Z" fill="url(#sg)"/>
<path d="M1148.4,483.4 l31.3,-15.2 a12,12 0 1 0 -16.1,-16.1 Z" fill="url(#sg)"/>
<path d="M1212.7,472.0 l31.3,-15.2 a12,12 0 1 0 -16.1,-16.1 Z" fill="url(#sg)"/>
<path d="M1184.0,505.6 l31.3,-15.2 a12,12 0 1 0 -16.1,-16.1 Z" fill="url(#sg)"/>
<path d="M1268.2,483.4 l31.3,-15.2 a12,12 0 1 0 -16.1,-16.1 Z" fill="url(#sg)"/>
<path d="M1276.6,510.6 l31.3,-15.2 a12,12 0 1 0 -16.1,-16.1 Z" fill="url(#sg)"/>
<path d="M1326.6,413.6 l31.3,-15.2 a12,12 0 1 0 -16.1,-16.1 Z" fill="url(#sg)"/>
<path d="M1323.7,430.2 l31.3,-15.2 a12,12 0 1 0 -16.1,-16.1 Z" fill="url(#sg)"/>
<path d="M1343.2,508.0 l31.3,-15.2 a12,12 0 1 0 -16.1,-16.1 Z" fill="url(#sg)"/>
<path d="M1137.7,545.5 l31.3,-15.2 a12,12 0 1 0 -16.1,-16.1 Z" fill="url(#sg)"/>
<path d="M1404.2,418.4 l31.3,-15.2 a12,12 0 1 0 -16.1,-16.1 Z" fill="url(#sg)"/>
<path d="M1369.5,477.2 l31.3,-15.2 a12,12 0 1 0 -16.1,-16.1 Z" fill="url(#sg)"/>
<path d="M1418.8,467.5 l31.3,-15.2 a12,12 0 1 0 -16.1,-16.1 Z" fill="url(#sg)"/>
<path d="M1390.0,529.8 l31.3,-15.2 a12,12 0 1 0 -16.1,-16.1 Z" fill="url(#sg)"/>
<path d="M1427.0,527.8 l31.3,-15.2 a12,12 0 1 0 -16.1,-16.1 Z" fill="url(#sg)"/>
<path d="M1441.2,561.6 l31.3,-15.2 a12,12 0 1 0 -16.1,-16.1 Z" fill="url(#sg)"/>
<path d="M1399.7,582.4 l31.3,-15.2 a12,12 0 1 0 -16.1,-16.1 Z" fill="url(#sg)"/>
<path d="M1487.3,507.4 l31.3,-15.2 a12,12 0 1 0 -16.1,-16.1 Z" fill="url(#sg)"/>
<path d="M1519.5,498.0 l31.3,-15.2 a12,12 0 1 0 -16.1,-16.1 Z" fill="url(#sg)"/>
<path d="M1568.6,477.6 l31.3,-15.2 a12,12 0 1 0 -16.1,-16.1 Z" fill="url(#sg)"/>
<path d="M1576.6,477.2 l31.3,-15.2 a12,12 0 1 0 -16.1,-16.1 Z" fill="url(#sg)"/>
<path d="M1601.6,478.5 l31.3,-15.2 a12,12 0 1 0 -16.1,-16.1 Z" fill="url(#sg)"/>
<path d="M1621.8,480.3 l31.3,-15.2 a12,12 0 1 0 -16.1,-16.1 Z" fill="url(#sg)"/>
<path d="M1354.0,606.0 l31.3,-15.2 a12,12 0 1 0 -16.1,-16.1 Z" fill="url(#sg)"/>
<path d="M1341.3,621.4 l31.3,-15.2 a12,12 0 1 0 -16.1,-16.1 Z" fill="url(#sg)"/>
<path d="M1297.0,611.6 l31.3,-15.2 a12,12 0 1 0 -16.1,-16.1 Z" fill="url(#sg)"/>
<path d="M1326.0,637.0 l31.3,-15.2 a12,12 0 1 0 -16.1,-16.1 Z" fill="url(#sg)"/>
<path d="M1253.6,650.6 l31.3,-15.2 a12,12 0 1 0 -16.1,-16.1 Z" fill="url(#sg)"/>
<path d="M1270.2,661.3 l31.3,-15.2 a12,12 0 1 0 -16.1,-16.1 Z" fill="url(#sg)"/>
<path d="M1422.0,654.5 l31.3,-15.2 a12,12 0 1 0 -16.1,-16.1 Z" fill="url(#sg)"/>
<path d="M1446.4,646.7 l31.3,-15.2 a12,12 0 1 0 -16.1,-16.1 Z" fill="url(#sg)"/>
<path d="M1440.0,642.0 l31.3,-15.2 a12,12 0 1 0 -16.1,-16.1 Z" fill="url(#sg)"/>
<path d="M1444.0,694.0 l31.3,-15.2 a12,12 0 1 0 -16.1,-16.1 Z" fill="url(#sg)"/>
<path d="M1060.7,677.9 l31.3,-15.2 a12,12 0 1 0 -16.1,-16.1 Z" fill="url(#sg)"/>
<path d="M815.0,704.0 l31.3,-15.2 a12,12 0 1 0 -16.1,-16.1 Z" fill="url(#sg)"/>
<path d="M590.7,493.2 l31.3,-15.2 a12,12 0 1 0 -16.1,-16.1 Z" fill="url(#sg)"/>
<path d="M582.5,488.0 l31.3,-15.2 a12,12 0 1 0 -16.1,-16.1 Z" fill="url(#sg)"/>
<path d="M491.5,536.6 l31.3,-15.2 a12,12 0 1 0 -16.1,-16.1 Z" fill="url(#sg)"/>
<path d="M560.5,529.8 l31.3,-15.2 a12,12 0 1 0 -16.1,-16.1 Z" fill="url(#sg)"/>
<path d="M638.6,528.4 l31.3,-15.2 a12,12 0 1 0 -16.1,-16.1 Z" fill="url(#sg)"/>
<path d="M590.7,588.8 l31.3,-15.2 a12,12 0 1 0 -16.1,-16.1 Z" fill="url(#sg)"/>
<path d="M737.7,566.2 l31.3,-15.2 a12,12 0 1 0 -16.1,-16.1 Z" fill="url(#sg)"/>
<path d="M616.2,628.8 l31.3,-15.2 a12,12 0 1 0 -16.1,-16.1 Z" fill="url(#sg)"/>
<path d="M488.4,643.2 l31.3,-15.2 a12,12 0 1 0 -16.1,-16.1 Z" fill="url(#sg)"/>
<path d="M522.1,659.4 l31.3,-15.2 a12,12 0 1 0 -16.1,-16.1 Z" fill="url(#sg)"/>
<path d="M535.7,653.5 l31.3,-15.2 a12,12 0 1 0 -16.1,-16.1 Z" fill="url(#sg)"/>
<path d="M573.3,647.7 l31.3,-15.2 a12,12 0 1 0 -16.1,-16.1 Z" fill="url(#sg)"/>
<path d="M650.0,676.9 l31.3,-15.2 a12,12 0 1 0 -16.1,-16.1 Z" fill="url(#sg)"/>
</g>
<use href="#mk" x="1012.7" y="135.7"/>
<use href="#mk" x="723.3" y="143.8"/>
<use href="#mk" x="1096.0" y="159.5"/>
<use href="#mk" x="1422.3" y="161.0"/>
<use href="#mk" x="751.7" y="168.0"/>
<use href="#mk" x="842.0" y="168.0"/>
<use href="#mk" x="493.0" y="169.5"/>
<use href="#mk" x="667.5" y="176.3"/>
<use href="#mk" x="771.7" y="178.8"/>
<use href="#mk" x="1295.7" y="179.0"/>
<use href="#mk" x="849.2" y="180.5"/>
<use href="#mk" x="598.7" y="190.5"/>
<use href="#mk" x="659.2" y="191.7"/>
<use href="#mk" x="977.6" y="199.6"/>
<use href="#mk" x="739.2" y="200.5"/>
<use href="#mk" x="1262.3" y="202.4"/>
<use href="#mk" x="902.5" y="202.7"/>
<use href="#mk" x="705.8" y="206.0"/>
<use href="#mk" x="791.7" y="206.0"/>
<use href="#mk" x="774.2" y="207.7"/>
<use href="#mk" x="806.3" y="207.7"/>
<use href="#mk" x="680.0" y="210.5"/>
<use href="#mk" x="1450.0" y="211.7"/>
<use href="#mk" x="546.7" y="216.3"/>
<use href="#mk" x="842.5" y="217.2"/>
<use href="#mk" x="853.3" y="217.2"/>
<use href="#mk" x="1131.1" y="217.3"/>
<use href="#mk" x="550.8" y="218.0"/>
<use href="#mk" x="863.3" y="219.7"/>
<use href="#mk" x="1441.3" y="220.5"/>
<use href="#mk" x="579.2" y="226.3"/>
<use href="#mk" x="1184.0" y="229.9"/>
<use href="#mk" x="565.0" y="231.0"/>
<use href="#mk" x="878.3" y="231.3"/>
<use href="#mk" x="1538.7" y="238.0"/>
<use href="#mk" x="920.1" y="247.2"/>
<use href="#mk" x="582.5" y="247.7"/>
<use href="#mk" x="1202.7" y="249.5"/>
<use href="#mk" x="1211.2" y="250.7"/>
<use href="#mk" x="1184.0" y="257.2"/>
<use href="#mk" x="482.0" y="262.4"/>
<use href="#mk" x="474.5" y="268.2"/>
<use href="#mk" x="1135.5" y="269.2"/>
<use href="#mk" x="1355.0" y="273.0"/>
<use href="#mk" x="463.0" y="273.7"/>
<use href="#mk" x="1134.0" y="276.5"/>
<use href="#mk" x="1142.5" y="281.3"/>
<use href="#mk" x="1476.3" y="296.5"/>
<use href="#mk" x="1123.1" y="300.3"/>
<use href="#mk" x="631.0" y="304.8"/>
<use href="#mk" x="1511.4" y="306.8"/>
<use href="#mk" x="1267.0" y="306.9"/>
<use href="#mk" x="1192.2" y="308.4"/>
<use href="#mk" x="1031.0" y="311.0"/>
<use href="#mk" x="1020.5" y="317.9"/>
<use href="#mk" x="1636.4" y="317.9"/>
<use href="#mk" x="1481.2" y="322.7"/>
<use href="#mk" x="1700.4" y="332.7"/>
<use href="#mk" x="1543.6" y="333.6"/>
<use href="#mk" x="487.0" y="341.8"/>
<use href="#mk" x="1551.6" y="343.4"/>
<use href="#mk" x="282.0" y="350.0"/>
<use href="#mk" x="1165.0" y="352.5"/>
<use href="#mk" x="405.0" y="353.0"/>
<use href="#mk" x="1166.0" y="358.0"/>
<use href="#mk" x="1167.9" y="364.2"/>
<use href="#mk" x="1676.6" y="364.8"/>
<use href="#mk" x="1226.9" y="369.0"/>
<use href="#mk" x="1326.6" y="369.6"/>
<use href="#mk" x="506.0" y="370.5"/>
<use href="#mk" x="1095.8" y="370.6"/>
<use href="#mk" x="1404.2" y="374.4"/>
<use href="#mk" x="1677.9" y="383.2"/>
<use href="#mk" x="1323.7" y="386.2"/>
<use href="#mk" x="349.2" y="387.4"/>
<use href="#mk" x="499.5" y="394.0"/>
<use href="#mk" x="1117.2" y="397.9"/>
<use href="#mk" x="1174.7" y="399.8"/>
<use href="#mk" x="1153.0" y="404.7"/>
<use href="#mk" x="1163.0" y="407.6"/>
<use href="#mk" x="310.8" y="408.8"/>
<use href="#mk" x="274.2" y="409.8"/>
<use href="#mk" x="1677.5" y="412.5"/>
<use href="#mk" x="1666.8" y="418.4"/>
<use href="#mk" x="1418.8" y="423.5"/>
<use href="#mk" x="1212.7" y="428.0"/>
<use href="#mk" x="1147.4" y="430.0"/>
<use href="#mk" x="1369.5" y="433.2"/>
<use href="#mk" x="1576.6" y="433.2"/>
<use href="#mk" x="1568.6" y="433.6"/>
<use href="#mk" x="1601.6" y="434.5"/>
<use href="#mk" x="1621.8" y="436.3"/>
<use href="#mk" x="1148.4" y="439.4"/>
<use href="#mk" x="1268.2" y="439.4"/>
<use href="#mk" x="373.1" y="443.0"/>
<use href="#mk" x="1703.4" y="443.9"/>
<use href="#mk" x="582.5" y="444.0"/>
<use href="#mk" x="590.7" y="449.2"/>
<use href="#mk" x="316.0" y="449.4"/>
<use href="#mk" x="1519.5" y="454.0"/>
<use href="#mk" x="321.0" y="455.2"/>
<use href="#mk" x="1184.0" y="461.6"/>
<use href="#mk" x="325.2" y="463.4"/>
<use href="#mk" x="1487.3" y="463.4"/>
<use href="#mk" x="1343.2" y="464.0"/>
<use href="#mk" x="1276.6" y="466.6"/>
<use href="#mk" x="1719.5" y="471.0"/>
<use href="#mk" x="387.6" y="476.6"/>
<use href="#mk" x="1427.0" y="483.8"/>
<use href="#mk" x="638.6" y="484.4"/>
<use href="#mk" x="1390.0" y="485.8"/>
<use href="#mk" x="560.5" y="485.8"/>
<use href="#mk" x="491.5" y="492.6"/>
<use href="#mk" x="1137.7" y="501.5"/>
<use href="#mk" x="1441.2" y="517.6"/>
<use href="#mk" x="1693.9" y="521.8"/>
<use href="#mk" x="737.7" y="522.2"/>
<use href="#mk" x="1399.7" y="538.4"/>
<use href="#mk" x="590.7" y="544.8"/>
<use href="#mk" x="1354.0" y="562.0"/>
<use href="#mk" x="1297.0" y="567.6"/>
<use href="#mk" x="443.5" y="573.4"/>
<use href="#mk" x="256.1" y="575.4"/>
<use href="#mk" x="1341.3" y="577.4"/>
<use href="#mk" x="616.2" y="584.8"/>
<use href="#mk" x="1326.0" y="593.0"/>
<use href="#mk" x="1440.0" y="598.0"/>
<use href="#mk" x="488.4" y="599.2"/>
<use href="#mk" x="1446.4" y="602.7"/>
<use href="#mk" x="573.3" y="603.7"/>
<use href="#mk" x="1253.6" y="606.6"/>
<use href="#mk" x="535.7" y="609.5"/>
<use href="#mk" x="1422.0" y="610.5"/>
<use href="#mk" x="326.8" y="611.8"/>
<use href="#mk" x="522.1" y="615.4"/>
<use href="#mk" x="1270.2" y="617.3"/>
<use href="#mk" x="650.0" y="632.9"/>
<use href="#mk" x="1060.7" y="633.9"/>
<use href="#mk" x="1444.0" y="650.0"/>
<use href="#mk" x="815.0" y="660.0"/>
</svg>
<div class="abs" style="left:34.5px;top:179.5px;width:53px;height:100.5px;border-radius:6px;background:rgba(0,0,0,0.25)"></div>
<div class="abs" style="left:36.75px;top:181.75px;width:48.5px;height:96px;border-radius:5px;background:#fff;overflow:hidden"><div class="abs" style="left:0;top:46.5px;width:48.5px;height:1.5px;background:#bbb"></div></div>
<svg class="abs" style="left:0;top:0" width="200" height="300"><rect x="51.5" y="207.3" width="20" height="4.2" fill="#000"/><rect x="59.4" y="199.4" width="4.2" height="20" fill="#000"/><rect x="51.5" y="254.6" width="20" height="5" fill="#000"/></svg>
<div class="abs" style="left:1965px;top:617px;width:419px;height:25px;background:rgba(255,255,255,0.8)"></div>
<div class="t" style="left:1971.6px;top:620.8px;font-size:17.9px;line-height:17.9px;color:#333;"><span style="color:#0078a8">Leaflet</span> | © <span style="color:#0078a8">OpenStreetMap</span> contributors, <span style="color:#0078a8">CC-BY-SA</span></div>
<div class="t" style="left:15.00px;top:28.78px;font-size:30.72px;line-height:30.72px;color:#fff;font-weight:400;font-style:normal;transform:scaleX(0.8965);">Wildlife VC regression</div>
<div class="t" style="left:20.90px;top:116.31px;font-size:21.16px;line-height:21.16px;color:#595959;font-weight:400;font-style:normal;">Placeholder for map</div>
<div class="t" style="left:20.84px;top:688.14px;font-size:21.01px;line-height:21.01px;color:#595959;font-weight:400;font-style:normal;transform:scaleX(0.9870);">Data Table</div>
<div class="t" style="left:1800.16px;top:688.89px;font-size:21.30px;line-height:21.30px;color:#595959;font-weight:400;font-style:normal;transform:scaleX(0.9875);">Sidebar</div>
<div class="t" style="left:1384.56px;top:744.81px;font-size:22.57px;line-height:22.57px;color:#222;font-weight:700;font-style:normal;transform:scaleX(0.9719);">Search:</div>
<div class="t" style="left:495.12px;top:805.29px;font-size:22.71px;line-height:22.71px;color:#222;font-weight:700;font-style:normal;transform:scaleX(0.9651);">County</div>
<div class="t" style="left:1033.84px;top:805.29px;font-size:22.71px;line-height:22.71px;color:#222;font-weight:700;font-style:normal;transform:scaleX(1.0531);">date</div>
<div class="t" style="left:1517.00px;top:805.29px;font-size:22.71px;line-height:22.71px;color:#222;font-weight:700;font-style:normal;transform:scaleX(1.0242);">road</div>
<div class="t" style="left:33.90px;top:868.84px;font-size:22.90px;line-height:22.90px;color:#222;font-weight:400;font-style:normal;">1</div>
<div class="t" style="left:294.80px;top:868.84px;font-size:22.90px;line-height:22.90px;color:#222;font-weight:400;font-style:normal;transform:scaleX(0.8686);">WAKE</div>
<div class="t" style="left:803.11px;top:868.84px;font-size:22.90px;line-height:22.90px;color:#222;font-weight:400;font-style:normal;transform:scaleX(0.9550);">2018-01-24</div>
<div class="t" style="left:1344.77px;top:868.84px;font-size:22.90px;line-height:22.90px;color:#222;font-weight:400;font-style:normal;transform:scaleX(0.9011);">SR 1104</div>
<div class="t" style="left:33.36px;top:929.59px;font-size:22.90px;line-height:22.90px;color:#222;font-weight:400;font-style:normal;">2</div>
<div class="t" style="left:294.80px;top:929.59px;font-size:22.90px;line-height:22.90px;color:#222;font-weight:400;font-style:normal;transform:scaleX(0.8686);">WAKE</div>
<div class="t" style="left:803.10px;top:929.59px;font-size:22.90px;line-height:22.90px;color:#222;font-weight:400;font-style:normal;transform:scaleX(0.9569);">2018-01-20</div>
<div class="t" style="left:1344.79px;top:929.59px;font-size:22.90px;line-height:22.90px;color:#222;font-weight:400;font-style:normal;transform:scaleX(0.8882);">SR 1007</div>
<div class="t" style="left:33.81px;top:990.34px;font-size:22.90px;line-height:22.90px;color:#222;font-weight:400;font-style:normal;">3</div>
<div class="t" style="left:294.80px;top:990.34px;font-size:22.90px;line-height:22.90px;color:#222;font-weight:400;font-style:normal;transform:scaleX(0.8686);">WAKE</div>
<div class="t" style="left:803.10px;top:990.34px;font-size:22.90px;line-height:22.90px;color:#222;font-weight:400;font-style:normal;transform:scaleX(0.9588);">2018-01-02</div>
<div class="t" style="left:1344.79px;top:990.34px;font-size:22.90px;line-height:22.90px;color:#222;font-weight:400;font-style:normal;transform:scaleX(0.8882);">SR 1379</div>
<div class="t" style="left:34.04px;top:1051.09px;font-size:22.90px;line-height:22.90px;color:#222;font-weight:400;font-style:normal;">4</div>
<div class="t" style="left:294.80px;top:1051.09px;font-size:22.90px;line-height:22.90px;color:#222;font-weight:400;font-style:normal;transform:scaleX(0.8686);">WAKE</div>
<div class="t" style="left:803.10px;top:1051.09px;font-size:22.90px;line-height:22.90px;color:#222;font-weight:400;font-style:normal;transform:scaleX(0.9588);">2018-01-01</div>
<div class="t" style="left:1344.79px;top:1051.09px;font-size:22.90px;line-height:22.90px;color:#222;font-weight:400;font-style:normal;transform:scaleX(0.8836);">SR 3014</div>
<div class="t" style="left:33.58px;top:1111.84px;font-size:22.90px;line-height:22.90px;color:#222;font-weight:400;font-style:normal;">5</div>
<div class="t" style="left:294.80px;top:1111.84px;font-size:22.90px;line-height:22.90px;color:#222;font-weight:400;font-style:normal;transform:scaleX(0.8686);">WAKE</div>
<div class="t" style="left:803.10px;top:1111.84px;font-size:22.90px;line-height:22.90px;color:#222;font-weight:400;font-style:normal;transform:scaleX(0.9569);">2018-01-10</div>
<div class="t" style="left:1344.79px;top:1111.84px;font-size:22.90px;line-height:22.90px;color:#222;font-weight:400;font-style:normal;transform:scaleX(0.8882);">SR 2547</div>
<div class="t" style="left:33.36px;top:1172.59px;font-size:22.90px;line-height:22.90px;color:#222;font-weight:400;font-style:normal;">6</div>
<div class="t" style="left:294.80px;top:1172.59px;font-size:22.90px;line-height:22.90px;color:#222;font-weight:400;font-style:normal;transform:scaleX(0.8686);">WAKE</div>
<div class="t" style="left:803.10px;top:1172.59px;font-size:22.90px;line-height:22.90px;color:#222;font-weight:400;font-style:normal;transform:scaleX(0.9569);">2018-01-18</div>
<div class="t" style="left:1344.79px;top:1172.59px;font-size:22.90px;line-height:22.90px;color:#222;font-weight:400;font-style:normal;transform:scaleX(0.8859);">SR 2725</div>
<div class="t" style="left:1797.18px;top:741.66px;font-size:22.75px;line-height:22.75px;color:#222;font-weight:400;font-style:normal;transform:scaleX(0.9287);">Year</div>
<div class="t" style="left:1817.62px;top:794.03px;font-size:22.32px;line-height:22.32px;color:#222;font-weight:400;font-style:normal;transform:scaleX(0.9701);">2018</div>
<div class="t" style="left:1797.47px;top:869.66px;font-size:22.75px;line-height:22.75px;color:#222;font-weight:400;font-style:normal;transform:scaleX(0.9894);">County Name</div>
<div class="t" style="left:1818.60px;top:921.34px;font-size:22.90px;line-height:22.90px;color:#222;font-weight:400;font-style:normal;transform:scaleX(0.8671);">WAKE</div>
<div class="abs" style="left:0;top:1160px;width:2400px;height:72px;background:linear-gradient(rgba(0,0,0,0),rgba(0,0,0,0.035))"></div>
</body></html>
